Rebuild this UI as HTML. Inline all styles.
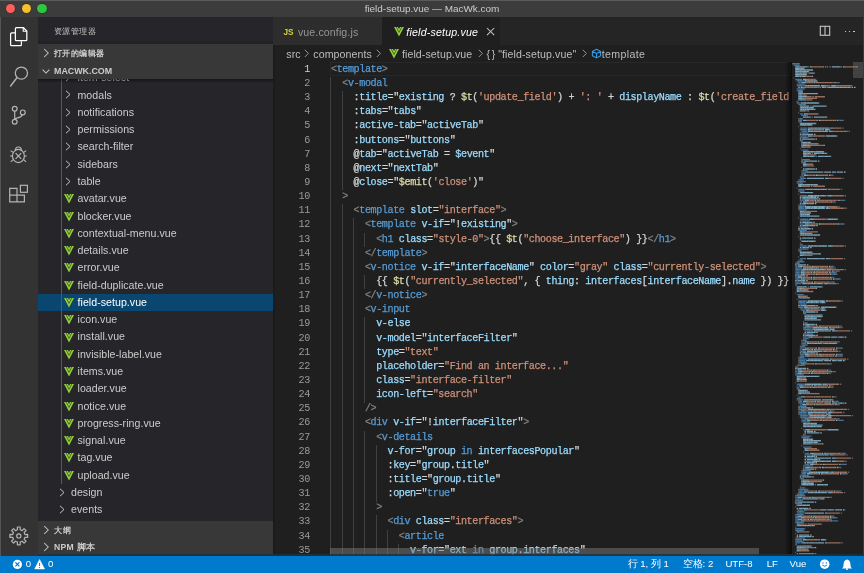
<!DOCTYPE html>
<html><head><meta charset="utf-8">
<style>
*{margin:0;padding:0;box-sizing:border-box}
html,body{width:864px;height:573px;overflow:hidden;background:#1f1f1f;font-family:"Liberation Sans",sans-serif;position:relative}
.abs{position:absolute}
#root{position:absolute;left:0;top:0;width:864px;height:573px;overflow:hidden;will-change:transform}
.row{position:absolute;left:0;width:273.3px;height:17.27px;line-height:16.9px;font-size:10.6px;letter-spacing:0.04px;white-space:nowrap}
.row .tx{position:absolute;top:0}
.sec{position:absolute;left:37.7px;width:235.6px;height:17.28px;background:#383839;color:#cccccc;font-size:8.6px;font-weight:bold;line-height:17.28px;white-space:nowrap}
.ln{position:absolute;left:331.00px;height:14.14px;line-height:14.14px;white-space:pre;font-family:"Liberation Mono",monospace;font-size:10.1px;letter-spacing:-0.408px;-webkit-text-stroke:0.25px}
.num{position:absolute;left:270px;width:39.80px;text-align:right;height:14.14px;line-height:14.14px;font-family:"Liberation Mono",monospace;font-size:10.1px;letter-spacing:-0.408px;color:#9a9a9a}
.num.cur{color:#d0d0d0}
.p{color:#808080}.t{color:#569cd6}.a{color:#9cdcfe}.o{color:#d4d4d4}.s{color:#ce9178}.f{color:#dcdcaa}.v{color:#9cdcfe}.k{color:#569cd6}
.ig{position:absolute;width:0.9px;background:#404040}
.st{position:absolute;top:0;height:17.3px;line-height:17.3px;font-size:9.6px;color:#fff;white-space:nowrap}
</style></head><body><div id="root">
<!-- title bar -->
<div class="abs" style="left:0;top:0;width:864px;height:17.3px;background:#3c3c3c"></div>
<div class="abs" style="left:0;top:0;width:864px;height:0.8px;background:#5a5a5a"></div>
<div class="abs" style="left:0;top:0;width:864px;height:17.3px;line-height:17.6px;text-align:center;color:#cccccc;font-size:9.95px">field-setup.vue — MacWk.com</div>
<div class="abs" style="left:5.9px;top:3.8px;width:9.6px;height:9.6px;border-radius:50%;background:#fc605c;box-shadow:0 0 0 0.5px rgba(0,0,0,0.3)"></div>
<div class="abs" style="left:21.5px;top:3.8px;width:9.6px;height:9.6px;border-radius:50%;background:#f4c02c;box-shadow:0 0 0 0.5px rgba(0,0,0,0.3)"></div>
<div class="abs" style="left:37.3px;top:3.8px;width:9.6px;height:9.6px;border-radius:50%;background:#30c640;box-shadow:0 0 0 0.5px rgba(0,0,0,0.3)"></div>

<!-- activity bar -->
<div class="abs" style="left:0;top:17.3px;width:37.7px;height:538.4px;background:#333333"></div>
<div class="abs" style="left:0;top:17.3px;width:1px;height:538.4px;background:#555555"></div>
<svg class="abs" style="left:0;top:17.3px" width="38" height="38" viewBox="0 17.3 38 38">
<path d="M15.4,33.2 L11.6,33.2 Q10.6,33.2 10.6,34.2 L10.6,45 Q10.6,46 11.6,46 L20.4,46 Q21.4,46 21.4,45 L21.4,41.6" fill="none" stroke="#ffffff" stroke-width="1.25"/>
<path d="M16.4,28 L23.4,28 L26.8,31.4 L26.8,40 Q26.8,41 25.8,41 L16.4,41 Q15.4,41 15.4,40 L15.4,29 Q15.4,28 16.4,28 Z" fill="none" stroke="#ffffff" stroke-width="1.25"/>
<path d="M23.2,28.2 L23.2,31.6 L26.6,31.6" fill="none" stroke="#ffffff" stroke-width="1.1"/>
</svg><svg class="abs" style="left:0;top:55px" width="38" height="38" viewBox="0 55 38 38">
<circle cx="21.4" cy="73.1" r="6.1" fill="none" stroke="#b4b4b4" stroke-width="1.25"/>
<line x1="17.1" y1="77.5" x2="10.6" y2="86" stroke="#b4b4b4" stroke-width="1.4" stroke-linecap="round"/>
</svg><svg class="abs" style="left:0;top:93px" width="38" height="38" viewBox="0 93 38 38">
<circle cx="14.7" cy="108.7" r="2.4" fill="none" stroke="#b4b4b4" stroke-width="1.2"/>
<circle cx="22.8" cy="112.4" r="2.4" fill="none" stroke="#b4b4b4" stroke-width="1.2"/>
<circle cx="14.7" cy="121.8" r="2.4" fill="none" stroke="#b4b4b4" stroke-width="1.2"/>
<path d="M14.7,111.1 L14.7,119.4 M22.3,114.8 Q21.5,117.2 17.5,117.8 Q15.2,118.2 14.9,119.3" fill="none" stroke="#b4b4b4" stroke-width="1.2"/>
</svg><svg class="abs" style="left:0;top:131px" width="38" height="38" viewBox="0 131 38 38">
<path d="M15.4,150.6 Q15.4,147 18.4,147 Q21.4,147 21.4,150.6" fill="none" stroke="#b4b4b4" stroke-width="1.2"/>
<ellipse cx="18.4" cy="156" rx="6" ry="6.6" fill="none" stroke="#b4b4b4" stroke-width="1.2"/>
<path d="M15.6,153.2 L21.2,158.8 M21.2,153.2 L15.6,158.8" stroke="#b4b4b4" stroke-width="1.2"/>
<path d="M12.8,152.2 L10.6,150.6 M12.4,156 L10,156 M12.8,159.8 L10.8,161.8 M24,152.2 L26.2,150.6 M24.4,156 L26.8,156 M24,159.8 L26,161.8" stroke="#b4b4b4" stroke-width="1.1"/>
</svg><svg class="abs" style="left:0;top:169px" width="38" height="38" viewBox="0 169 38 38">
<path d="M9.7,188.3 L17,188.3 L17,201.8 L9.7,201.8 Z M9.7,195.05 L24.4,195.05 L24.4,201.8 L9.7,201.8" fill="none" stroke="#b4b4b4" stroke-width="1.2"/>
<rect x="20.4" y="185.3" width="7" height="7" fill="none" stroke="#b4b4b4" stroke-width="1.2"/>
</svg><svg class="abs" style="left:0;top:516px" width="38" height="38" viewBox="0 516 38 38">
<path d="M24.95,534.53 L27.69,534.47 L27.69,537.33 L24.95,537.27 L24.12,539.28 L26.10,541.17 L24.07,543.20 L22.18,541.22 L20.17,542.05 L20.23,544.79 L17.37,544.79 L17.43,542.05 L15.42,541.22 L13.53,543.20 L11.50,541.17 L13.48,539.28 L12.65,537.27 L9.91,537.33 L9.91,534.47 L12.65,534.53 L13.48,532.52 L11.50,530.63 L13.53,528.60 L15.42,530.58 L17.43,529.75 L17.37,527.01 L20.23,527.01 L20.17,529.75 L22.18,530.58 L24.07,528.60 L26.10,530.63 L24.12,532.52 Z" fill="none" stroke="#b4b4b4" stroke-width="1.2" stroke-linejoin="round"/>
<circle cx="18.80" cy="535.90" r="2.1" fill="none" stroke="#b4b4b4" stroke-width="1.2"/>
</svg>

<!-- sidebar -->
<div class="abs" style="left:37.7px;top:17.3px;width:235.6px;height:538.4px;background:#26262a"></div>
<div class="abs" style="left:37.7px;top:79.3px;width:235.6px;height:441.8px;overflow:hidden">
  <div class="abs" style="left:-37.7px;top:-79.3px;width:273.3px;height:573px">
  <div class="row" style="top:69.39px;color:#cccccc"><svg class="abs" style="left:65.40px;top:3.83px" width="6" height="9"><polyline points="1,0.8 5,4.5 1,8.2" fill="none" stroke="#c5c5c5" stroke-width="1"/></svg><span class="tx" style="left:77.50px">item-select</span></div><div class="row" style="top:86.66px;color:#cccccc"><svg class="abs" style="left:65.40px;top:3.83px" width="6" height="9"><polyline points="1,0.8 5,4.5 1,8.2" fill="none" stroke="#c5c5c5" stroke-width="1"/></svg><span class="tx" style="left:77.50px">modals</span></div><div class="row" style="top:103.93px;color:#cccccc"><svg class="abs" style="left:65.40px;top:3.83px" width="6" height="9"><polyline points="1,0.8 5,4.5 1,8.2" fill="none" stroke="#c5c5c5" stroke-width="1"/></svg><span class="tx" style="left:77.50px">notifications</span></div><div class="row" style="top:121.20px;color:#cccccc"><svg class="abs" style="left:65.40px;top:3.83px" width="6" height="9"><polyline points="1,0.8 5,4.5 1,8.2" fill="none" stroke="#c5c5c5" stroke-width="1"/></svg><span class="tx" style="left:77.50px">permissions</span></div><div class="row" style="top:138.48px;color:#cccccc"><svg class="abs" style="left:65.40px;top:3.83px" width="6" height="9"><polyline points="1,0.8 5,4.5 1,8.2" fill="none" stroke="#c5c5c5" stroke-width="1"/></svg><span class="tx" style="left:77.50px">search-filter</span></div><div class="row" style="top:155.75px;color:#cccccc"><svg class="abs" style="left:65.40px;top:3.83px" width="6" height="9"><polyline points="1,0.8 5,4.5 1,8.2" fill="none" stroke="#c5c5c5" stroke-width="1"/></svg><span class="tx" style="left:77.50px">sidebars</span></div><div class="row" style="top:173.02px;color:#cccccc"><svg class="abs" style="left:65.40px;top:3.83px" width="6" height="9"><polyline points="1,0.8 5,4.5 1,8.2" fill="none" stroke="#c5c5c5" stroke-width="1"/></svg><span class="tx" style="left:77.50px">table</span></div><div class="row" style="top:190.29px;color:#cccccc"><svg class="abs" style="left:64.30px;top:4.13px" width="11" height="11" viewBox="0 0 11 11"><path fill="#92cf3a" d="M0,0 L3.95,0 L5,2 L6.05,0 L10,0 L5,9.6 Z"/><path d="M2.05,-0.3 L5,5.4 L7.95,-0.3" fill="none" stroke="rgba(25,35,30,0.8)" stroke-width="0.7"/></svg><span class="tx" style="left:77.50px">avatar.vue</span></div><div class="row" style="top:207.56px;color:#cccccc"><svg class="abs" style="left:64.30px;top:4.13px" width="11" height="11" viewBox="0 0 11 11"><path fill="#92cf3a" d="M0,0 L3.95,0 L5,2 L6.05,0 L10,0 L5,9.6 Z"/><path d="M2.05,-0.3 L5,5.4 L7.95,-0.3" fill="none" stroke="rgba(25,35,30,0.8)" stroke-width="0.7"/></svg><span class="tx" style="left:77.50px">blocker.vue</span></div><div class="row" style="top:224.83px;color:#cccccc"><svg class="abs" style="left:64.30px;top:4.13px" width="11" height="11" viewBox="0 0 11 11"><path fill="#92cf3a" d="M0,0 L3.95,0 L5,2 L6.05,0 L10,0 L5,9.6 Z"/><path d="M2.05,-0.3 L5,5.4 L7.95,-0.3" fill="none" stroke="rgba(25,35,30,0.8)" stroke-width="0.7"/></svg><span class="tx" style="left:77.50px">contextual-menu.vue</span></div><div class="row" style="top:242.09px;color:#cccccc"><svg class="abs" style="left:64.30px;top:4.13px" width="11" height="11" viewBox="0 0 11 11"><path fill="#92cf3a" d="M0,0 L3.95,0 L5,2 L6.05,0 L10,0 L5,9.6 Z"/><path d="M2.05,-0.3 L5,5.4 L7.95,-0.3" fill="none" stroke="rgba(25,35,30,0.8)" stroke-width="0.7"/></svg><span class="tx" style="left:77.50px">details.vue</span></div><div class="row" style="top:259.37px;color:#cccccc"><svg class="abs" style="left:64.30px;top:4.13px" width="11" height="11" viewBox="0 0 11 11"><path fill="#92cf3a" d="M0,0 L3.95,0 L5,2 L6.05,0 L10,0 L5,9.6 Z"/><path d="M2.05,-0.3 L5,5.4 L7.95,-0.3" fill="none" stroke="rgba(25,35,30,0.8)" stroke-width="0.7"/></svg><span class="tx" style="left:77.50px">error.vue</span></div><div class="row" style="top:276.63px;color:#cccccc"><svg class="abs" style="left:64.30px;top:4.13px" width="11" height="11" viewBox="0 0 11 11"><path fill="#92cf3a" d="M0,0 L3.95,0 L5,2 L6.05,0 L10,0 L5,9.6 Z"/><path d="M2.05,-0.3 L5,5.4 L7.95,-0.3" fill="none" stroke="rgba(25,35,30,0.8)" stroke-width="0.7"/></svg><span class="tx" style="left:77.50px">field-duplicate.vue</span></div><div class="row" style="top:293.90px;background:#094771;color:#ffffff"><svg class="abs" style="left:64.30px;top:4.13px" width="11" height="11" viewBox="0 0 11 11"><path fill="#92cf3a" d="M0,0 L3.95,0 L5,2 L6.05,0 L10,0 L5,9.6 Z"/><path d="M2.05,-0.3 L5,5.4 L7.95,-0.3" fill="none" stroke="rgba(25,35,30,0.8)" stroke-width="0.7"/></svg><span class="tx" style="left:77.50px">field-setup.vue</span></div><div class="row" style="top:311.18px;color:#cccccc"><svg class="abs" style="left:64.30px;top:4.13px" width="11" height="11" viewBox="0 0 11 11"><path fill="#92cf3a" d="M0,0 L3.95,0 L5,2 L6.05,0 L10,0 L5,9.6 Z"/><path d="M2.05,-0.3 L5,5.4 L7.95,-0.3" fill="none" stroke="rgba(25,35,30,0.8)" stroke-width="0.7"/></svg><span class="tx" style="left:77.50px">icon.vue</span></div><div class="row" style="top:328.45px;color:#cccccc"><svg class="abs" style="left:64.30px;top:4.13px" width="11" height="11" viewBox="0 0 11 11"><path fill="#92cf3a" d="M0,0 L3.95,0 L5,2 L6.05,0 L10,0 L5,9.6 Z"/><path d="M2.05,-0.3 L5,5.4 L7.95,-0.3" fill="none" stroke="rgba(25,35,30,0.8)" stroke-width="0.7"/></svg><span class="tx" style="left:77.50px">install.vue</span></div><div class="row" style="top:345.72px;color:#cccccc"><svg class="abs" style="left:64.30px;top:4.13px" width="11" height="11" viewBox="0 0 11 11"><path fill="#92cf3a" d="M0,0 L3.95,0 L5,2 L6.05,0 L10,0 L5,9.6 Z"/><path d="M2.05,-0.3 L5,5.4 L7.95,-0.3" fill="none" stroke="rgba(25,35,30,0.8)" stroke-width="0.7"/></svg><span class="tx" style="left:77.50px">invisible-label.vue</span></div><div class="row" style="top:362.99px;color:#cccccc"><svg class="abs" style="left:64.30px;top:4.13px" width="11" height="11" viewBox="0 0 11 11"><path fill="#92cf3a" d="M0,0 L3.95,0 L5,2 L6.05,0 L10,0 L5,9.6 Z"/><path d="M2.05,-0.3 L5,5.4 L7.95,-0.3" fill="none" stroke="rgba(25,35,30,0.8)" stroke-width="0.7"/></svg><span class="tx" style="left:77.50px">items.vue</span></div><div class="row" style="top:380.25px;color:#cccccc"><svg class="abs" style="left:64.30px;top:4.13px" width="11" height="11" viewBox="0 0 11 11"><path fill="#92cf3a" d="M0,0 L3.95,0 L5,2 L6.05,0 L10,0 L5,9.6 Z"/><path d="M2.05,-0.3 L5,5.4 L7.95,-0.3" fill="none" stroke="rgba(25,35,30,0.8)" stroke-width="0.7"/></svg><span class="tx" style="left:77.50px">loader.vue</span></div><div class="row" style="top:397.52px;color:#cccccc"><svg class="abs" style="left:64.30px;top:4.13px" width="11" height="11" viewBox="0 0 11 11"><path fill="#92cf3a" d="M0,0 L3.95,0 L5,2 L6.05,0 L10,0 L5,9.6 Z"/><path d="M2.05,-0.3 L5,5.4 L7.95,-0.3" fill="none" stroke="rgba(25,35,30,0.8)" stroke-width="0.7"/></svg><span class="tx" style="left:77.50px">notice.vue</span></div><div class="row" style="top:414.79px;color:#cccccc"><svg class="abs" style="left:64.30px;top:4.13px" width="11" height="11" viewBox="0 0 11 11"><path fill="#92cf3a" d="M0,0 L3.95,0 L5,2 L6.05,0 L10,0 L5,9.6 Z"/><path d="M2.05,-0.3 L5,5.4 L7.95,-0.3" fill="none" stroke="rgba(25,35,30,0.8)" stroke-width="0.7"/></svg><span class="tx" style="left:77.50px">progress-ring.vue</span></div><div class="row" style="top:432.07px;color:#cccccc"><svg class="abs" style="left:64.30px;top:4.13px" width="11" height="11" viewBox="0 0 11 11"><path fill="#92cf3a" d="M0,0 L3.95,0 L5,2 L6.05,0 L10,0 L5,9.6 Z"/><path d="M2.05,-0.3 L5,5.4 L7.95,-0.3" fill="none" stroke="rgba(25,35,30,0.8)" stroke-width="0.7"/></svg><span class="tx" style="left:77.50px">signal.vue</span></div><div class="row" style="top:449.34px;color:#cccccc"><svg class="abs" style="left:64.30px;top:4.13px" width="11" height="11" viewBox="0 0 11 11"><path fill="#92cf3a" d="M0,0 L3.95,0 L5,2 L6.05,0 L10,0 L5,9.6 Z"/><path d="M2.05,-0.3 L5,5.4 L7.95,-0.3" fill="none" stroke="rgba(25,35,30,0.8)" stroke-width="0.7"/></svg><span class="tx" style="left:77.50px">tag.vue</span></div><div class="row" style="top:466.61px;color:#cccccc"><svg class="abs" style="left:64.30px;top:4.13px" width="11" height="11" viewBox="0 0 11 11"><path fill="#92cf3a" d="M0,0 L3.95,0 L5,2 L6.05,0 L10,0 L5,9.6 Z"/><path d="M2.05,-0.3 L5,5.4 L7.95,-0.3" fill="none" stroke="rgba(25,35,30,0.8)" stroke-width="0.7"/></svg><span class="tx" style="left:77.50px">upload.vue</span></div><div class="row" style="top:483.88px;color:#cccccc"><svg class="abs" style="left:58.90px;top:3.83px" width="6" height="9"><polyline points="1,0.8 5,4.5 1,8.2" fill="none" stroke="#c5c5c5" stroke-width="1"/></svg><span class="tx" style="left:71.00px">design</span></div><div class="row" style="top:501.14px;color:#cccccc"><svg class="abs" style="left:58.90px;top:3.83px" width="6" height="9"><polyline points="1,0.8 5,4.5 1,8.2" fill="none" stroke="#c5c5c5" stroke-width="1"/></svg><span class="tx" style="left:71.00px">events</span></div>
  <div class="abs" style="left:61.3px;top:79.3px;width:0.9px;height:405px;background:#585858"></div>
  </div>
</div>
<div class="abs" style="left:53.8px;top:17.3px;height:27.5px;line-height:29.6px;font-size:8.3px;letter-spacing:0.5px;color:#cccccc;white-space:nowrap">资源管理器</div>
<div class="abs" style="left:37.7px;top:41px;width:235.6px;height:3px;background:#222226"></div>
<div class="sec" style="top:44.1px;height:17.95px"><svg class="abs" style="left:5.00px;top:3.90px" width="7" height="10"><polyline points="1.2,1 5.2,5 1.2,9" fill="none" stroke="#c5c5c5" stroke-width="1.05"/></svg><span class="abs" style="left:16.3px;top:0.6px;font-size:8.3px;letter-spacing:0.4px">打开的编辑器</span></div>
<div class="sec" style="top:62.05px"><svg class="abs" style="left:3.40px;top:5.80px" width="10" height="7"><polyline points="1.6,1.6 5,5 8.4,1.6" fill="none" stroke="#c5c5c5" stroke-width="1.05"/></svg><span class="abs" style="left:16.3px;top:0.9px;font-size:8.9px">MACWK.COM</span></div>
<div class="abs" style="left:37.7px;top:79.3px;width:235.6px;height:4px;background:linear-gradient(rgba(0,0,0,0.45),rgba(0,0,0,0))"></div>
<div class="sec" style="top:521.1px"><svg class="abs" style="left:5.00px;top:3.90px" width="7" height="10"><polyline points="1.2,1 5.2,5 1.2,9" fill="none" stroke="#c5c5c5" stroke-width="1.05"/></svg><span class="abs" style="left:16.3px;top:0.9px;font-size:8.4px;letter-spacing:0.8px">大纲</span></div>
<div class="sec" style="top:538.4px"><svg class="abs" style="left:5.00px;top:3.90px" width="7" height="10"><polyline points="1.2,1 5.2,5 1.2,9" fill="none" stroke="#c5c5c5" stroke-width="1.05"/></svg><span class="abs" style="left:16.3px;top:1.1px;font-size:8.6px;letter-spacing:0.35px">NPM 脚本</span></div>

<!-- editor -->
<div class="abs" style="left:273.3px;top:17.3px;width:590.7px;height:27.5px;background:#252526"></div>
<div class="abs" style="left:273.3px;top:44.8px;width:1.6px;height:510.9px;background:#1b1b1b"></div>
<div class="abs" style="left:273.3px;top:17.3px;width:108.4px;height:27.5px;background:#2d2d2d"></div>
<div class="abs" style="left:283.6px;top:18.5px;height:27.5px;line-height:27.5px;font-size:8.2px;letter-spacing:-0.2px;font-weight:bold;color:#d8d23a">JS</div>
<div class="abs" style="left:297.9px;top:18.5px;height:27.5px;line-height:27.5px;font-size:10.6px;letter-spacing:0.12px;color:#969696">vue.config.js</div>
<div class="abs" style="left:381.7px;top:17.3px;width:118.5px;height:27.5px;background:#1f1f1f"></div>
<svg class="abs" style="left:394.00px;top:27.40px" width="11" height="11" viewBox="0 0 11 11"><path fill="#92cf3a" d="M0,0 L3.95,0 L5,2 L6.05,0 L10,0 L5,9.6 Z"/><path d="M2.05,-0.3 L5,5.4 L7.95,-0.3" fill="none" stroke="rgba(25,35,30,0.8)" stroke-width="0.7"/></svg>
<div class="abs" style="left:406.3px;top:18.5px;height:27.5px;line-height:27.5px;font-size:10.6px;letter-spacing:0.2px;font-style:italic;color:#ffffff">field-setup.vue</div>
<svg class="abs" style="left:486.3px;top:27.2px" width="10" height="10"><path d="M1,1 L8.2,8.2 M8.2,1 L1,8.2" stroke="#c5c5c5" stroke-width="1.05"/></svg>
<svg class="abs" style="left:818px;top:24px" width="14" height="14"><rect x="2.3" y="2.3" width="9.4" height="9" fill="none" stroke="#c5c5c5" stroke-width="1.1"/><line x1="7" y1="2.3" x2="7" y2="11.3" stroke="#c5c5c5" stroke-width="1.1"/></svg>
<div class="abs" style="left:844.7px;top:30.8px;width:1.6px;height:1.6px;background:#c5c5c5"></div>
<div class="abs" style="left:848.9px;top:30.8px;width:1.6px;height:1.6px;background:#c5c5c5"></div>
<div class="abs" style="left:853.1px;top:30.8px;width:1.6px;height:1.6px;background:#c5c5c5"></div>

<!-- breadcrumbs -->
<div class="abs" style="left:286.30px;top:44.77px;height:17.28px;line-height:18.2px;font-size:10.6px;letter-spacing:0.1px;color:#bdbdbd;white-space:nowrap;">src</div><svg class="abs" style="left:304.40px;top:49.3px" width="6" height="9"><polyline points="0.8,0.8 4.4,4.4 0.8,8" fill="none" stroke="#a0a0a0" stroke-width="0.9"/></svg><div class="abs" style="left:313.30px;top:44.77px;height:17.28px;line-height:18.2px;font-size:10.6px;letter-spacing:0.1px;color:#bdbdbd;white-space:nowrap;">components</div><svg class="abs" style="left:376.00px;top:49.3px" width="6" height="9"><polyline points="0.8,0.8 4.4,4.4 0.8,8" fill="none" stroke="#a0a0a0" stroke-width="0.9"/></svg><svg class="abs" style="left:388.80px;top:48.80px" width="11" height="11" viewBox="0 0 11 11"><path fill="#92cf3a" d="M0,0 L3.95,0 L5,2 L6.05,0 L10,0 L5,9.6 Z"/><path d="M2.05,-0.3 L5,5.4 L7.95,-0.3" fill="none" stroke="rgba(25,35,30,0.8)" stroke-width="0.7"/></svg><div class="abs" style="left:401.90px;top:44.77px;height:17.28px;line-height:18.2px;font-size:10.6px;letter-spacing:0.1px;color:#bdbdbd;white-space:nowrap;">field-setup.vue</div><svg class="abs" style="left:477.80px;top:49.3px" width="6" height="9"><polyline points="0.8,0.8 4.4,4.4 0.8,8" fill="none" stroke="#a0a0a0" stroke-width="0.9"/></svg><div class="abs" style="left:486.60px;top:44.77px;height:17.28px;line-height:18.2px;font-size:10.6px;letter-spacing:0.1px;color:#bdbdbd;white-space:nowrap;letter-spacing:1.5px">{}</div><div class="abs" style="left:498.20px;top:44.77px;height:17.28px;line-height:18.2px;font-size:10.6px;letter-spacing:0.1px;color:#bdbdbd;white-space:nowrap;">"field-setup.vue"</div><svg class="abs" style="left:582.00px;top:49.3px" width="6" height="9"><polyline points="0.8,0.8 4.4,4.4 0.8,8" fill="none" stroke="#a0a0a0" stroke-width="0.9"/></svg><svg class="abs" style="left:590.5px;top:47.8px" width="12" height="12"><path d="M5.5,1.3 L9.6,3.4 L9.6,7.8 L5.5,9.9 L1.4,7.8 L1.4,3.4 Z M1.4,3.4 L5.5,5.5 L9.6,3.4 M5.5,5.5 L5.5,9.9" fill="none" stroke="#3a9ce0" stroke-width="1.05" stroke-linejoin="round"/></svg><div class="abs" style="left:601.70px;top:44.77px;height:17.28px;line-height:18.2px;font-size:10.6px;letter-spacing:0.1px;color:#bdbdbd;white-space:nowrap;letter-spacing:0.38px">template</div>

<!-- code -->
<div class="abs" style="left:329.5px;top:62.2px;width:461.5px;height:14.2px;border:1.2px solid #282828"></div>
<div class="num cur" style="top:62.90px">1</div><div class="num" style="top:77.04px">2</div><div class="num" style="top:91.18px">3</div><div class="num" style="top:105.32px">4</div><div class="num" style="top:119.46px">5</div><div class="num" style="top:133.60px">6</div><div class="num" style="top:147.74px">7</div><div class="num" style="top:161.88px">8</div><div class="num" style="top:176.02px">9</div><div class="num" style="top:190.16px">10</div><div class="num" style="top:204.30px">11</div><div class="num" style="top:218.44px">12</div><div class="num" style="top:232.58px">13</div><div class="num" style="top:246.72px">14</div><div class="num" style="top:260.86px">15</div><div class="num" style="top:275.00px">16</div><div class="num" style="top:289.14px">17</div><div class="num" style="top:303.28px">18</div><div class="num" style="top:317.42px">19</div><div class="num" style="top:331.56px">20</div><div class="num" style="top:345.70px">21</div><div class="num" style="top:359.84px">22</div><div class="num" style="top:373.98px">23</div><div class="num" style="top:388.12px">24</div><div class="num" style="top:402.26px">25</div><div class="num" style="top:416.40px">26</div><div class="num" style="top:430.54px">27</div><div class="num" style="top:444.68px">28</div><div class="num" style="top:458.82px">29</div><div class="num" style="top:472.96px">30</div><div class="num" style="top:487.10px">31</div><div class="num" style="top:501.24px">32</div><div class="num" style="top:515.38px">33</div><div class="num" style="top:529.52px">34</div><div class="num" style="top:543.66px">35</div>
<div class="abs" style="left:0;top:0;width:791px;height:555.7px;overflow:hidden">
<div class="ig" style="left:330.40px;top:77.04px;height:14.44px"></div><div class="ig" style="left:330.40px;top:91.18px;height:14.44px"></div><div class="ig" style="left:341.70px;top:91.18px;height:14.44px"></div><div class="ig" style="left:330.40px;top:105.32px;height:14.44px"></div><div class="ig" style="left:341.70px;top:105.32px;height:14.44px"></div><div class="ig" style="left:330.40px;top:119.46px;height:14.44px"></div><div class="ig" style="left:341.70px;top:119.46px;height:14.44px"></div><div class="ig" style="left:330.40px;top:133.60px;height:14.44px"></div><div class="ig" style="left:341.70px;top:133.60px;height:14.44px"></div><div class="ig" style="left:330.40px;top:147.74px;height:14.44px"></div><div class="ig" style="left:341.70px;top:147.74px;height:14.44px"></div><div class="ig" style="left:330.40px;top:161.88px;height:14.44px"></div><div class="ig" style="left:341.70px;top:161.88px;height:14.44px"></div><div class="ig" style="left:330.40px;top:176.02px;height:14.44px"></div><div class="ig" style="left:341.70px;top:176.02px;height:14.44px"></div><div class="ig" style="left:330.40px;top:190.16px;height:14.44px"></div><div class="ig" style="left:330.40px;top:204.30px;height:14.44px"></div><div class="ig" style="left:341.70px;top:204.30px;height:14.44px"></div><div class="ig" style="left:330.40px;top:218.44px;height:14.44px"></div><div class="ig" style="left:341.70px;top:218.44px;height:14.44px"></div><div class="ig" style="left:353.01px;top:218.44px;height:14.44px"></div><div class="ig" style="left:330.40px;top:232.58px;height:14.44px"></div><div class="ig" style="left:341.70px;top:232.58px;height:14.44px"></div><div class="ig" style="left:353.01px;top:232.58px;height:14.44px"></div><div class="ig" style="left:364.31px;top:232.58px;height:14.44px"></div><div class="ig" style="left:330.40px;top:246.72px;height:14.44px"></div><div class="ig" style="left:341.70px;top:246.72px;height:14.44px"></div><div class="ig" style="left:353.01px;top:246.72px;height:14.44px"></div><div class="ig" style="left:330.40px;top:260.86px;height:14.44px"></div><div class="ig" style="left:341.70px;top:260.86px;height:14.44px"></div><div class="ig" style="left:353.01px;top:260.86px;height:14.44px"></div><div class="ig" style="left:330.40px;top:275.00px;height:14.44px"></div><div class="ig" style="left:341.70px;top:275.00px;height:14.44px"></div><div class="ig" style="left:353.01px;top:275.00px;height:14.44px"></div><div class="ig" style="left:364.31px;top:275.00px;height:14.44px"></div><div class="ig" style="left:330.40px;top:289.14px;height:14.44px"></div><div class="ig" style="left:341.70px;top:289.14px;height:14.44px"></div><div class="ig" style="left:353.01px;top:289.14px;height:14.44px"></div><div class="ig" style="left:330.40px;top:303.28px;height:14.44px"></div><div class="ig" style="left:341.70px;top:303.28px;height:14.44px"></div><div class="ig" style="left:353.01px;top:303.28px;height:14.44px"></div><div class="ig" style="left:330.40px;top:317.42px;height:14.44px"></div><div class="ig" style="left:341.70px;top:317.42px;height:14.44px"></div><div class="ig" style="left:353.01px;top:317.42px;height:14.44px"></div><div class="ig" style="left:364.31px;top:317.42px;height:14.44px"></div><div class="ig" style="left:330.40px;top:331.56px;height:14.44px"></div><div class="ig" style="left:341.70px;top:331.56px;height:14.44px"></div><div class="ig" style="left:353.01px;top:331.56px;height:14.44px"></div><div class="ig" style="left:364.31px;top:331.56px;height:14.44px"></div><div class="ig" style="left:330.40px;top:345.70px;height:14.44px"></div><div class="ig" style="left:341.70px;top:345.70px;height:14.44px"></div><div class="ig" style="left:353.01px;top:345.70px;height:14.44px"></div><div class="ig" style="left:364.31px;top:345.70px;height:14.44px"></div><div class="ig" style="left:330.40px;top:359.84px;height:14.44px"></div><div class="ig" style="left:341.70px;top:359.84px;height:14.44px"></div><div class="ig" style="left:353.01px;top:359.84px;height:14.44px"></div><div class="ig" style="left:364.31px;top:359.84px;height:14.44px"></div><div class="ig" style="left:330.40px;top:373.98px;height:14.44px"></div><div class="ig" style="left:341.70px;top:373.98px;height:14.44px"></div><div class="ig" style="left:353.01px;top:373.98px;height:14.44px"></div><div class="ig" style="left:364.31px;top:373.98px;height:14.44px"></div><div class="ig" style="left:330.40px;top:388.12px;height:14.44px"></div><div class="ig" style="left:341.70px;top:388.12px;height:14.44px"></div><div class="ig" style="left:353.01px;top:388.12px;height:14.44px"></div><div class="ig" style="left:364.31px;top:388.12px;height:14.44px"></div><div class="ig" style="left:330.40px;top:402.26px;height:14.44px"></div><div class="ig" style="left:341.70px;top:402.26px;height:14.44px"></div><div class="ig" style="left:353.01px;top:402.26px;height:14.44px"></div><div class="ig" style="left:330.40px;top:416.40px;height:14.44px"></div><div class="ig" style="left:341.70px;top:416.40px;height:14.44px"></div><div class="ig" style="left:353.01px;top:416.40px;height:14.44px"></div><div class="ig" style="left:330.40px;top:430.54px;height:14.44px"></div><div class="ig" style="left:341.70px;top:430.54px;height:14.44px"></div><div class="ig" style="left:353.01px;top:430.54px;height:14.44px"></div><div class="ig" style="left:364.31px;top:430.54px;height:14.44px"></div><div class="ig" style="left:330.40px;top:444.68px;height:14.44px"></div><div class="ig" style="left:341.70px;top:444.68px;height:14.44px"></div><div class="ig" style="left:353.01px;top:444.68px;height:14.44px"></div><div class="ig" style="left:364.31px;top:444.68px;height:14.44px"></div><div class="ig" style="left:375.62px;top:444.68px;height:14.44px"></div><div class="ig" style="left:330.40px;top:458.82px;height:14.44px"></div><div class="ig" style="left:341.70px;top:458.82px;height:14.44px"></div><div class="ig" style="left:353.01px;top:458.82px;height:14.44px"></div><div class="ig" style="left:364.31px;top:458.82px;height:14.44px"></div><div class="ig" style="left:375.62px;top:458.82px;height:14.44px"></div><div class="ig" style="left:330.40px;top:472.96px;height:14.44px"></div><div class="ig" style="left:341.70px;top:472.96px;height:14.44px"></div><div class="ig" style="left:353.01px;top:472.96px;height:14.44px"></div><div class="ig" style="left:364.31px;top:472.96px;height:14.44px"></div><div class="ig" style="left:375.62px;top:472.96px;height:14.44px"></div><div class="ig" style="left:330.40px;top:487.10px;height:14.44px"></div><div class="ig" style="left:341.70px;top:487.10px;height:14.44px"></div><div class="ig" style="left:353.01px;top:487.10px;height:14.44px"></div><div class="ig" style="left:364.31px;top:487.10px;height:14.44px"></div><div class="ig" style="left:375.62px;top:487.10px;height:14.44px"></div><div class="ig" style="left:330.40px;top:501.24px;height:14.44px"></div><div class="ig" style="left:341.70px;top:501.24px;height:14.44px"></div><div class="ig" style="left:353.01px;top:501.24px;height:14.44px"></div><div class="ig" style="left:364.31px;top:501.24px;height:14.44px"></div><div class="ig" style="left:330.40px;top:515.38px;height:14.44px"></div><div class="ig" style="left:341.70px;top:515.38px;height:14.44px"></div><div class="ig" style="left:353.01px;top:515.38px;height:14.44px"></div><div class="ig" style="left:364.31px;top:515.38px;height:14.44px"></div><div class="ig" style="left:375.62px;top:515.38px;height:14.44px"></div><div class="ig" style="left:330.40px;top:529.52px;height:14.44px"></div><div class="ig" style="left:341.70px;top:529.52px;height:14.44px"></div><div class="ig" style="left:353.01px;top:529.52px;height:14.44px"></div><div class="ig" style="left:364.31px;top:529.52px;height:14.44px"></div><div class="ig" style="left:375.62px;top:529.52px;height:14.44px"></div><div class="ig" style="left:386.92px;top:529.52px;height:14.44px"></div><div class="ig" style="left:330.40px;top:543.66px;height:14.44px"></div><div class="ig" style="left:341.70px;top:543.66px;height:14.44px"></div><div class="ig" style="left:353.01px;top:543.66px;height:14.44px"></div><div class="ig" style="left:364.31px;top:543.66px;height:14.44px"></div><div class="ig" style="left:375.62px;top:543.66px;height:14.44px"></div><div class="ig" style="left:386.92px;top:543.66px;height:14.44px"></div><div class="ig" style="left:398.22px;top:543.66px;height:14.44px"></div>
<div class="ln" style="top:62.90px"><span class="p">&lt;</span><span class="t">template</span><span class="p">&gt;</span></div><div class="ln" style="top:77.04px"><span class="o">  </span><span class="p">&lt;</span><span class="t">v-modal</span></div><div class="ln" style="top:91.18px"><span class="o">    </span><span class="o">:</span><span class="a">title</span><span class="o">=&quot;</span><span class="v">existing</span><span class="o"> </span><span class="o">?</span><span class="o"> </span><span class="f">$t</span><span class="o">(</span><span class="s">&#x27;update_field&#x27;</span><span class="o">)</span><span class="o"> </span><span class="o">+</span><span class="o"> </span><span class="s">&#x27;: &#x27;</span><span class="o"> </span><span class="o">+</span><span class="o"> </span><span class="v">displayName</span><span class="o"> </span><span class="o">:</span><span class="o"> </span><span class="f">$t</span><span class="o">(</span><span class="s">&#x27;create_field&#x27;</span><span class="o">)</span><span class="o">&quot;</span></div><div class="ln" style="top:105.32px"><span class="o">    </span><span class="o">:</span><span class="a">tabs</span><span class="o">=&quot;</span><span class="v">tabs</span><span class="o">&quot;</span></div><div class="ln" style="top:119.46px"><span class="o">    </span><span class="o">:</span><span class="a">active-tab</span><span class="o">=&quot;</span><span class="v">activeTab</span><span class="o">&quot;</span></div><div class="ln" style="top:133.60px"><span class="o">    </span><span class="o">:</span><span class="a">buttons</span><span class="o">=&quot;</span><span class="v">buttons</span><span class="o">&quot;</span></div><div class="ln" style="top:147.74px"><span class="o">    </span><span class="o">@</span><span class="a">tab</span><span class="o">=&quot;</span><span class="v">activeTab</span><span class="o"> </span><span class="o">=</span><span class="o"> </span><span class="v">$event</span><span class="o">&quot;</span></div><div class="ln" style="top:161.88px"><span class="o">    </span><span class="o">@</span><span class="a">next</span><span class="o">=&quot;</span><span class="v">nextTab</span><span class="o">&quot;</span></div><div class="ln" style="top:176.02px"><span class="o">    </span><span class="o">@</span><span class="a">close</span><span class="o">=&quot;</span><span class="f">$emit</span><span class="o">(</span><span class="s">&#x27;close&#x27;</span><span class="o">)</span><span class="o">&quot;</span></div><div class="ln" style="top:190.16px"><span class="o">  </span><span class="p">&gt;</span></div><div class="ln" style="top:204.30px"><span class="o">    </span><span class="p">&lt;</span><span class="t">template</span><span class="o"> </span><span class="a">slot</span><span class="o">=</span><span class="s">&quot;interface&quot;</span><span class="p">&gt;</span></div><div class="ln" style="top:218.44px"><span class="o">      </span><span class="p">&lt;</span><span class="t">template</span><span class="o"> </span><span class="a">v-if</span><span class="o">=&quot;</span><span class="o">!</span><span class="v">existing</span><span class="o">&quot;</span><span class="p">&gt;</span></div><div class="ln" style="top:232.58px"><span class="o">        </span><span class="p">&lt;</span><span class="t">h1</span><span class="o"> </span><span class="a">class</span><span class="o">=</span><span class="s">&quot;style-0&quot;</span><span class="p">&gt;</span><span class="o">{{</span><span class="o"> </span><span class="f">$t</span><span class="o">(</span><span class="s">&quot;choose_interface&quot;</span><span class="o">)</span><span class="o"> </span><span class="o">}}</span><span class="p">&lt;/</span><span class="t">h1</span><span class="p">&gt;</span></div><div class="ln" style="top:246.72px"><span class="o">      </span><span class="p">&lt;/</span><span class="t">template</span><span class="p">&gt;</span></div><div class="ln" style="top:260.86px"><span class="o">      </span><span class="p">&lt;</span><span class="t">v-notice</span><span class="o"> </span><span class="a">v-if</span><span class="o">=&quot;</span><span class="v">interfaceName</span><span class="o">&quot;</span><span class="o"> </span><span class="a">color</span><span class="o">=</span><span class="s">&quot;gray&quot;</span><span class="o"> </span><span class="a">class</span><span class="o">=</span><span class="s">&quot;currently-selected&quot;</span><span class="p">&gt;</span></div><div class="ln" style="top:275.00px"><span class="o">        </span><span class="o">{{</span><span class="o"> </span><span class="f">$t</span><span class="o">(</span><span class="s">&quot;currently_selected&quot;</span><span class="o">,</span><span class="o"> </span><span class="o">{</span><span class="o"> </span><span class="v">thing</span><span class="o">:</span><span class="o"> </span><span class="v">interfaces</span><span class="o">[</span><span class="v">interfaceName</span><span class="o">]</span><span class="o">.</span><span class="v">name</span><span class="o"> </span><span class="o">}</span><span class="o">)</span><span class="o"> </span><span class="o">}}</span></div><div class="ln" style="top:289.14px"><span class="o">      </span><span class="p">&lt;/</span><span class="t">v-notice</span><span class="p">&gt;</span></div><div class="ln" style="top:303.28px"><span class="o">      </span><span class="p">&lt;</span><span class="t">v-input</span></div><div class="ln" style="top:317.42px"><span class="o">        </span><span class="a">v-else</span></div><div class="ln" style="top:331.56px"><span class="o">        </span><span class="a">v-model</span><span class="o">=&quot;</span><span class="v">interfaceFilter</span><span class="o">&quot;</span></div><div class="ln" style="top:345.70px"><span class="o">        </span><span class="a">type</span><span class="o">=</span><span class="s">&quot;text&quot;</span></div><div class="ln" style="top:359.84px"><span class="o">        </span><span class="a">placeholder</span><span class="o">=</span><span class="s">&quot;Find an interface...&quot;</span></div><div class="ln" style="top:373.98px"><span class="o">        </span><span class="a">class</span><span class="o">=</span><span class="s">&quot;interface-filter&quot;</span></div><div class="ln" style="top:388.12px"><span class="o">        </span><span class="a">icon-left</span><span class="o">=</span><span class="s">&quot;search&quot;</span></div><div class="ln" style="top:402.26px"><span class="o">      </span><span class="p">/&gt;</span></div><div class="ln" style="top:416.40px"><span class="o">      </span><span class="p">&lt;</span><span class="t">div</span><span class="o"> </span><span class="a">v-if</span><span class="o">=&quot;</span><span class="o">!</span><span class="v">interfaceFilter</span><span class="o">&quot;</span><span class="p">&gt;</span></div><div class="ln" style="top:430.54px"><span class="o">        </span><span class="p">&lt;</span><span class="t">v-details</span></div><div class="ln" style="top:444.68px"><span class="o">          </span><span class="a">v-for</span><span class="o">=&quot;</span><span class="v">group</span><span class="o"> </span><span class="k">in</span><span class="o"> </span><span class="v">interfacesPopular</span><span class="o">&quot;</span></div><div class="ln" style="top:458.82px"><span class="o">          </span><span class="o">:</span><span class="a">key</span><span class="o">=&quot;</span><span class="v">group</span><span class="o">.</span><span class="v">title</span><span class="o">&quot;</span></div><div class="ln" style="top:472.96px"><span class="o">          </span><span class="o">:</span><span class="a">title</span><span class="o">=&quot;</span><span class="v">group</span><span class="o">.</span><span class="v">title</span><span class="o">&quot;</span></div><div class="ln" style="top:487.10px"><span class="o">          </span><span class="o">:</span><span class="a">open</span><span class="o">=&quot;</span><span class="k">true</span><span class="o">&quot;</span></div><div class="ln" style="top:501.24px"><span class="o">        </span><span class="p">&gt;</span></div><div class="ln" style="top:515.38px"><span class="o">          </span><span class="p">&lt;</span><span class="t">div</span><span class="o"> </span><span class="a">class</span><span class="o">=</span><span class="s">&quot;interfaces&quot;</span><span class="p">&gt;</span></div><div class="ln" style="top:529.52px"><span class="o">            </span><span class="p">&lt;</span><span class="t">article</span></div><div class="ln" style="top:543.66px"><span class="o">              </span><span class="a">v-for</span><span class="o">=&quot;</span><span class="v">ext</span><span class="o"> </span><span class="k">in</span><span class="o"> </span><span class="v">group</span><span class="o">.</span><span class="v">interfaces</span><span class="o">&quot;</span></div>
</div>
<svg class="abs" style="left:791.60px;top:62.60px;opacity:0.8" width="72.40" height="493.10"><path d="M0.00,0.75h0.79M7.06,0.75h0.79M1.57,2.32h0.79M1.57,14.89h0.79M3.14,16.46h0.79M23.55,16.46h0.79M4.71,18.03h0.79M25.12,18.03h0.79M6.28,19.60h0.79M21.19,19.60h0.79M43.96,19.60h1.57M47.10,19.60h0.79M4.71,21.17h1.57M12.56,21.17h0.79M4.71,22.74h0.79M59.66,22.74h0.79M4.71,25.89h1.57M12.56,25.89h0.79M4.71,27.46h0.79M4.71,38.45h1.57M4.71,40.02h0.79M26.69,40.02h0.79M6.28,41.60h0.79M6.28,49.45h0.79M7.85,51.02h0.79M25.90,51.02h0.79M9.42,52.59h0.79M6.28,55.74h1.57M10.21,55.74h0.79M6.28,57.31h0.79M23.55,57.31h0.79M46.31,57.31h1.57M51.02,57.31h0.79M6.28,58.88h0.79M6.28,63.59h0.79M7.85,65.16h0.79M50.24,65.16h1.57M7.85,66.73h0.79M37.68,66.73h0.79M9.42,68.30h0.79M56.52,68.30h1.57M7.85,69.87h1.57M15.70,69.87h0.79M7.85,73.02h0.79M44.74,73.02h0.79M7.85,74.59h1.57M15.70,74.59h0.79M7.85,77.73h0.79M7.85,85.58h0.79M9.42,87.16h0.79M9.42,95.01h0.79M9.42,96.58h1.57M17.27,96.58h0.79M9.42,99.72h0.79M9.42,104.44h0.79M9.42,107.58h1.57M14.91,107.58h0.79M9.42,109.15h0.79M53.38,109.15h0.79M9.42,110.72h1.57M13.35,110.72h0.79M9.42,112.29h0.79M20.41,112.29h0.79M38.46,112.29h1.57M40.82,112.29h0.79M7.85,113.86h1.57M11.78,113.86h0.79M7.85,115.43h0.79M50.24,115.43h1.57M6.28,117.00h1.57M10.99,117.00h0.79M4.71,118.58h1.57M13.35,118.58h0.79M4.71,120.15h0.79M4.71,124.86h0.79M6.28,126.43h0.79M48.67,126.43h1.57M6.28,128.00h0.79M6.28,131.14h0.79M7.85,132.71h0.79M52.59,132.71h1.57M7.85,137.43h0.79M21.98,137.43h0.79M47.88,137.43h1.57M52.59,137.43h0.79M7.85,139.00h0.79M19.62,139.00h0.79M40.03,139.00h1.57M43.17,139.00h0.79M6.28,142.14h1.57M13.35,142.14h0.79M6.28,143.71h0.79M46.31,143.71h1.57M6.28,145.28h0.79M53.38,145.28h1.57M6.28,146.85h0.79M6.28,154.71h0.79M7.85,156.28h0.79M45.53,156.28h0.79M7.85,157.85h1.57M17.27,157.85h0.79M7.85,160.99h0.79M23.55,160.99h0.79M47.10,160.99h1.57M51.81,160.99h0.79M6.28,164.13h1.57M15.70,164.13h0.79M6.28,167.28h0.79M6.28,173.56h0.79M7.85,176.70h0.79M7.85,179.84h0.79M7.85,181.41h1.57M10.21,181.41h0.79M7.85,182.99h0.79M52.59,182.99h1.57M6.28,186.13h1.57M15.70,186.13h0.79M6.28,187.70h0.79M6.28,193.98h0.79M7.85,195.55h0.79M51.81,195.55h1.57M6.28,197.13h1.57M10.21,197.13h0.79M4.71,198.70h1.57M11.78,198.70h0.79M3.14,200.27h1.57M7.07,200.27h0.79M3.14,203.41h0.79M16.48,203.41h0.79M38.46,203.41h1.57M41.61,203.41h0.79M3.14,204.98h0.79M42.39,204.98h1.57M3.14,206.55h0.79M52.59,206.55h1.57M3.14,208.12h0.79M21.19,208.12h0.79M41.60,208.12h1.57M47.10,208.12h0.79M3.14,209.69h0.79M18.05,209.69h0.79M38.46,209.69h1.57M43.96,209.69h0.79M3.14,211.26h0.79M20.41,211.26h0.79M39.25,211.26h1.57M44.74,211.26h0.79M3.14,214.41h0.79M18.05,214.41h0.79M39.25,214.41h1.57M41.60,214.41h0.79M3.14,215.98h0.79M18.05,215.98h0.79M42.39,215.98h1.57M47.88,215.98h0.79M3.14,219.12h0.79M18.84,219.12h0.79M36.89,219.12h1.57M42.39,219.12h0.79M3.14,220.69h0.79M45.53,220.69h1.57M3.14,222.26h0.79M3.14,230.12h0.79M4.71,231.69h0.79M4.71,236.40h0.79M6.28,237.97h0.79M49.45,237.97h1.57M6.28,239.54h0.79M32.97,239.54h0.79M6.28,241.11h1.57M14.13,241.11h0.79M6.28,244.26h0.79M43.96,244.26h0.79M7.85,245.83h0.79M32.97,245.83h0.79M9.42,247.40h0.79M33.75,247.40h0.79M10.99,250.54h0.79M10.99,258.39h0.79M10.99,259.96h1.57M14.92,259.96h0.79M10.99,263.11h0.79M23.55,263.11h0.79M47.10,263.11h1.57M49.45,263.11h0.79M10.99,264.68h0.79M49.45,264.68h1.57M10.99,266.25h0.79M42.39,266.25h0.79M12.56,267.82h0.79M58.87,267.82h1.57M10.99,270.96h1.57M20.41,270.96h0.79M10.99,274.10h0.79M54.16,274.10h0.79M10.99,275.68h1.57M16.49,275.68h0.79M9.42,277.25h1.57M14.13,277.25h0.79M9.42,278.82h0.79M25.12,278.82h0.79M43.96,278.82h1.57M47.10,278.82h0.79M9.42,280.39h0.79M44.74,280.39h0.79M9.42,281.96h1.57M14.91,281.96h0.79M7.85,283.53h1.57M12.56,283.53h0.79M7.85,285.10h0.79M22.76,285.10h0.79M45.53,285.10h1.57M50.24,285.10h0.79M7.85,286.67h0.79M18.84,286.67h0.79M42.39,286.67h1.57M44.74,286.67h0.79M7.85,288.24h0.79M47.10,288.24h1.57M7.85,291.38h0.79M23.55,291.38h0.79M45.53,291.38h1.57M50.24,291.38h0.79M7.85,292.96h0.79M24.33,292.96h0.79M44.74,292.96h1.57M50.24,292.96h0.79M6.28,294.53h1.57M11.77,294.53h0.79M6.28,296.10h0.79M54.95,296.10h1.57M6.28,297.67h0.79M52.59,297.67h0.79M6.28,299.24h1.57M14.13,299.24h0.79M6.28,300.81h0.79M19.62,300.81h0.79M36.89,300.81h1.57M39.25,300.81h0.79M4.71,302.38h1.57M12.56,302.38h0.79M3.14,303.95h1.57M5.50,303.95h0.79M3.14,307.09h0.79M18.05,307.09h0.79M36.11,307.09h1.57M38.46,307.09h0.79M3.14,308.67h0.79M16.48,308.67h0.79M40.03,308.67h1.57M43.17,308.67h0.79M3.14,310.24h0.79M15.70,310.24h0.79M36.11,310.24h1.57M38.46,310.24h0.79M3.14,311.81h0.79M3.14,319.66h0.79M4.71,321.23h0.79M47.88,321.23h1.57M4.71,322.81h0.79M18.84,322.81h0.79M38.46,322.81h1.57M40.82,322.81h0.79M4.71,324.38h0.79M17.27,324.38h0.79M37.68,324.38h1.57M40.82,324.38h0.79M4.71,325.95h0.79M4.71,332.23h0.79M6.28,333.80h0.79M21.19,333.80h0.79M41.60,333.80h1.57M43.96,333.80h0.79M4.71,335.37h1.57M8.64,335.37h0.79M4.71,336.94h0.79M40.82,336.94h0.79M6.28,338.51h0.79M21.98,338.51h0.79M41.60,338.51h1.57M46.31,338.51h0.79M6.28,340.09h0.79M54.16,340.09h0.79M7.85,341.66h0.79M21.19,341.66h0.79M44.74,341.66h1.57M47.10,341.66h0.79M6.28,343.23h1.57M14.13,343.23h0.79M6.28,346.37h0.79M55.73,346.37h1.57M6.28,347.94h0.79M18.05,347.94h0.79M39.25,347.94h1.57M41.60,347.94h0.79M6.28,349.51h0.79M51.02,349.51h1.57M6.28,351.08h0.79M38.46,351.08h0.79M7.85,352.65h0.79M59.66,352.65h1.57M7.85,354.22h0.79M39.25,354.22h0.79M9.42,355.80h0.79M24.33,355.80h0.79M43.96,355.80h1.57M47.10,355.80h0.79M9.42,357.37h0.79M27.47,357.37h0.79M45.53,357.37h1.57M51.02,357.37h0.79M9.42,358.94h0.79M9.42,365.22h0.79M10.99,366.79h0.79M46.31,366.79h0.79M10.99,371.51h1.57M13.35,371.51h0.79M9.42,373.08h1.57M18.84,373.08h0.79M9.42,374.65h0.79M9.42,382.50h0.79M10.99,384.07h0.79M10.99,388.79h0.79M12.56,390.36h0.79M29.04,390.36h0.79M47.88,390.36h1.57M53.38,390.36h0.79M12.56,391.93h0.79M54.16,391.93h1.57M12.56,395.07h0.79M59.66,395.07h1.57M12.56,398.21h0.79M53.38,398.21h1.57M12.56,401.35h0.79M27.47,401.35h0.79M48.67,401.35h1.57M54.16,401.35h0.79M10.99,402.93h1.57M20.41,402.93h0.79M10.99,404.50h0.79M26.69,404.50h0.79M46.31,404.50h1.57M48.67,404.50h0.79M9.42,407.64h1.57M18.06,407.64h0.79M9.42,409.21h0.79M55.73,409.21h1.57M9.42,410.78h0.79M25.90,410.78h0.79M49.45,410.78h1.57M54.95,410.78h0.79M7.85,412.35h1.57M16.49,412.35h0.79M7.85,415.49h0.79M7.85,423.35h0.79M7.85,424.92h1.57M12.56,424.92h0.79M6.28,426.49h1.57M15.70,426.49h0.79M6.28,428.06h0.79M22.76,428.06h0.79M43.17,428.06h1.57M48.67,428.06h0.79M6.28,429.63h0.79M51.81,429.63h1.57M4.71,431.20h1.57M11.78,431.20h0.79M3.14,432.77h1.57M12.56,432.77h0.79M3.14,434.35h0.79M16.48,434.35h0.79M36.89,434.35h1.57M39.25,434.35h0.79M3.14,435.92h0.79M32.18,435.92h0.79M3.14,437.49h1.57M10.21,437.49h0.79M3.14,440.63h0.79M3.14,443.77h0.79M4.71,446.91h0.79M52.59,446.91h0.79M4.71,448.49h1.57M11.78,448.49h0.79M4.71,450.06h0.79M48.67,450.06h1.57M3.14,451.63h1.57M10.99,451.63h0.79M3.14,453.20h0.79M18.05,453.20h0.79M39.25,453.20h1.57M41.60,453.20h0.79M3.14,454.77h0.79M19.62,454.77h0.79M39.25,454.77h1.57M44.74,454.77h0.79M3.14,456.34h0.79M14.91,456.34h0.79M36.89,456.34h1.57M39.25,456.34h0.79M3.14,457.91h0.79M21.19,457.91h0.79M40.03,457.91h1.57M45.53,457.91h0.79M3.14,459.48h0.79M3.14,464.19h0.79M3.14,465.77h1.57M12.56,465.77h0.79M3.14,467.34h0.79M3.14,470.48h0.79M3.14,475.19h1.57M12.56,475.19h0.79M3.14,476.76h0.79M33.75,476.76h0.79M3.14,478.33h1.57M10.99,478.33h0.79M3.14,479.90h0.79M49.45,479.90h1.57M3.14,481.48h0.79M3.14,489.33h0.79" stroke="#808080" stroke-width="1.35" stroke-dasharray="0.68 0.11" fill="none"/><path d="M0.78,0.75h6.28M2.36,2.32h5.50M3.92,16.46h6.28M5.50,18.03h6.28M7.06,19.60h1.57M45.53,19.60h1.57M6.28,21.17h6.28M5.50,22.74h6.28M6.28,25.89h6.28M5.50,27.46h5.50M5.50,40.02h2.35M7.06,41.60h7.07M18.05,43.17h1.57M13.35,47.88h3.14M8.63,51.02h2.35M10.20,52.59h5.50M19.62,54.16h1.57M7.85,55.74h2.35M7.06,57.31h3.14M47.88,57.31h3.14M7.06,58.88h3.14M8.63,65.16h6.28M8.63,66.73h6.28M10.20,68.30h4.71M9.42,69.87h6.28M8.63,73.02h6.28M9.42,74.59h6.28M8.63,77.73h2.35M10.20,87.16h6.28M19.62,90.30h1.57M23.55,93.44h1.57M10.99,96.58h6.28M10.20,99.72h3.93M10.99,107.58h3.93M10.20,109.15h2.35M10.99,110.72h2.35M10.20,112.29h0.79M40.03,112.29h0.79M9.42,113.86h2.35M8.63,115.43h5.50M7.85,117.00h3.14M6.28,118.58h7.07M5.50,120.15h5.50M7.06,126.43h5.50M7.06,128.00h5.50M8.63,132.71h6.28M8.63,137.43h3.14M49.45,137.43h3.14M8.63,139.00h1.57M41.60,139.00h1.57M7.85,142.14h5.50M7.06,143.71h4.71M7.06,145.28h5.50M7.06,146.85h7.85M8.63,156.28h7.85M9.42,157.85h7.85M8.63,160.99h3.14M48.67,160.99h3.14M7.85,164.13h7.85M7.06,167.28h7.85M8.63,176.70h0.79M9.42,181.41h0.79M8.63,182.99h6.28M7.85,186.13h7.85M7.06,187.70h2.35M8.63,195.55h5.50M7.85,197.13h2.35M6.28,198.70h5.50M4.71,200.27h2.35M3.92,203.41h1.57M40.03,203.41h1.57M3.92,204.98h6.28M3.92,206.55h4.71M3.92,208.12h3.93M43.17,208.12h3.93M3.92,209.69h3.93M40.03,209.69h3.93M3.92,211.26h3.93M40.82,211.26h3.93M3.92,214.41h0.79M40.82,214.41h0.79M3.92,215.98h3.93M43.96,215.98h3.93M3.92,219.12h3.93M38.46,219.12h3.93M3.92,220.69h5.50M3.92,222.26h0.79M15.70,223.83h1.57M5.50,231.69h6.28M7.06,237.97h7.85M7.06,239.54h6.28M7.85,241.11h6.28M7.06,244.26h3.93M8.63,245.83h3.14M10.20,247.40h3.14M11.77,250.54h2.35M12.56,259.96h2.35M11.77,263.11h0.79M48.67,263.11h0.79M11.77,264.68h7.85M11.77,266.25h7.85M13.34,267.82h7.85M12.56,270.96h7.85M11.77,274.10h3.93M12.56,275.68h3.93M10.99,277.25h3.14M10.20,278.82h1.57M45.53,278.82h1.57M10.20,280.39h3.93M10.99,281.96h3.93M9.42,283.53h3.14M8.63,285.10h3.14M47.10,285.10h3.14M8.63,286.67h0.79M43.96,286.67h0.79M8.63,288.24h5.50M8.63,291.38h3.14M47.10,291.38h3.14M8.63,292.96h3.93M46.31,292.96h3.93M7.85,294.53h3.93M7.06,296.10h7.85M7.06,297.67h6.28M7.85,299.24h6.28M7.06,300.81h0.79M38.46,300.81h0.79M6.28,302.38h6.28M4.71,303.95h0.79M3.92,307.09h0.79M37.68,307.09h0.79M3.92,308.67h1.57M41.60,308.67h1.57M3.92,310.24h0.79M37.68,310.24h0.79M3.92,311.81h7.85M5.50,321.23h6.28M5.50,322.81h0.79M40.03,322.81h0.79M5.50,324.38h1.57M39.25,324.38h1.57M5.50,325.95h2.35M7.06,333.80h0.79M43.17,333.80h0.79M6.28,335.37h2.35M5.50,336.94h5.50M7.06,338.51h3.14M43.17,338.51h3.14M7.06,340.09h6.28M8.63,341.66h0.79M46.31,341.66h0.79M7.85,343.23h6.28M7.06,346.37h7.85M7.06,347.94h0.79M40.82,347.94h0.79M7.06,349.51h7.85M7.06,351.08h7.85M8.63,352.65h7.85M8.63,354.22h7.07M10.20,355.80h1.57M45.53,355.80h1.57M10.20,357.37h3.93M47.10,357.37h3.93M10.20,358.94h7.85M11.77,366.79h0.79M12.56,371.51h0.79M10.99,373.08h7.85M10.20,374.65h7.07M11.77,384.07h7.85M13.34,390.36h3.93M49.45,390.36h3.93M13.34,391.93h5.50M13.34,395.07h7.85M13.34,398.21h6.28M13.34,401.35h3.93M50.24,401.35h3.93M12.56,402.93h7.85M11.77,404.50h0.79M47.88,404.50h0.79M10.99,407.64h7.07M10.20,409.21h5.50M10.20,410.78h3.93M51.02,410.78h3.93M9.42,412.35h7.07M8.63,415.49h3.14M22.76,421.78h1.57M9.42,424.92h3.14M7.85,426.49h7.85M7.06,428.06h3.93M44.74,428.06h3.93M7.06,429.63h7.85M6.28,431.20h5.50M4.71,432.77h7.85M3.92,434.35h0.79M38.46,434.35h0.79M3.92,435.92h5.50M4.71,437.49h5.50M3.92,440.63h6.28M5.50,446.91h5.50M6.28,448.49h5.50M5.50,450.06h6.28M4.71,451.63h6.28M3.92,453.20h0.79M40.82,453.20h0.79M3.92,454.77h3.93M40.82,454.77h3.93M3.92,456.34h0.79M38.46,456.34h0.79M3.92,457.91h3.93M41.60,457.91h3.93M3.92,459.48h7.85M4.71,465.77h7.85M3.92,467.34h7.85M4.71,475.19h7.85M3.92,476.76h6.28M4.71,478.33h6.28M3.92,479.90h4.71M3.92,481.48h0.79" stroke="#569cd6" stroke-width="1.35" stroke-dasharray="0.68 0.11" fill="none"/><path d="M3.14,3.89h0.79M7.85,3.89h1.57M16.48,3.89h0.79M19.62,3.89h0.79M31.40,3.89h0.79M32.97,3.89h0.79M38.46,3.89h0.79M49.45,3.89h0.79M52.59,3.89h0.79M64.37,3.89h0.79M65.15,3.89h0.79M3.14,5.46h0.79M7.06,5.46h1.57M11.77,5.46h0.79M3.14,7.03h0.79M11.77,7.03h1.57M20.41,7.03h0.79M3.14,8.60h0.79M9.42,8.60h1.57M16.49,8.60h0.79M3.14,10.18h0.79M6.28,10.18h1.57M15.70,10.18h0.79M21.98,10.18h0.79M3.14,11.75h0.79M7.06,11.75h1.57M14.13,11.75h0.79M3.14,13.32h0.79M7.85,13.32h1.57M13.34,13.32h0.79M19.62,13.32h0.79M20.41,13.32h0.79M14.13,16.46h0.79M15.70,18.03h1.57M17.27,18.03h0.79M24.33,18.03h0.79M13.34,19.60h0.79M21.98,19.60h1.57M25.90,19.60h0.79M40.82,19.60h0.79M42.39,19.60h1.57M15.70,22.74h1.57M27.48,22.74h0.79M32.97,22.74h0.79M43.17,22.74h0.79M6.28,24.31h1.57M10.21,24.31h0.79M26.69,24.31h0.79M28.26,24.31h0.79M33.75,24.31h0.79M43.17,24.31h0.79M54.16,24.31h0.79M54.95,24.31h0.79M59.66,24.31h0.79M60.44,24.31h0.79M62.01,24.31h1.57M11.77,30.60h1.57M25.12,30.60h0.79M9.42,32.17h0.79M14.91,33.74h0.79M10.20,35.31h0.79M13.35,36.88h0.79M11.77,40.02h1.57M13.35,40.02h0.79M25.90,40.02h0.79M11.77,43.17h1.57M33.75,43.17h0.79M7.85,44.74h0.79M10.99,44.74h1.57M16.49,44.74h0.79M21.19,44.74h0.79M7.85,46.31h0.79M12.56,46.31h1.57M18.05,46.31h0.79M22.76,46.31h0.79M7.85,47.88h0.79M11.77,47.88h1.57M16.49,47.88h0.79M15.70,51.02h0.79M14.91,54.16h1.57M25.90,54.16h0.79M34.54,54.16h0.79M14.91,57.31h0.79M24.33,57.31h1.57M28.26,57.31h0.79M43.17,57.31h0.79M44.74,57.31h1.57M7.85,60.45h0.79M12.56,60.45h1.57M20.41,60.45h0.79M23.55,60.45h0.79M7.85,62.02h0.79M14.13,62.02h1.57M19.62,62.02h0.79M21.19,65.16h1.57M29.04,65.16h0.79M36.89,65.16h0.79M40.03,65.16h0.79M18.05,66.73h0.79M21.19,68.30h1.57M29.83,68.30h0.79M35.33,68.30h0.79M40.82,68.30h0.79M7.85,71.44h1.57M12.56,71.44h0.79M21.98,71.44h1.57M19.62,73.02h0.79M33.75,73.02h0.79M38.46,73.02h1.57M43.96,73.02h0.79M7.85,76.16h1.57M14.92,76.16h0.79M23.55,76.16h1.57M9.42,79.30h0.79M14.13,79.30h1.57M18.05,79.30h0.79M9.42,80.87h0.79M14.13,80.87h1.57M18.05,80.87h0.79M25.90,80.87h0.79M9.42,82.44h0.79M14.13,82.44h1.57M17.27,82.44h0.79M31.40,82.44h0.79M32.18,82.44h0.79M10.99,84.01h0.79M10.99,88.73h0.79M15.70,88.73h1.57M22.76,88.73h0.79M31.40,88.73h0.79M14.13,90.30h1.57M27.48,90.30h0.79M34.54,90.30h0.79M14.91,91.87h0.79M10.99,93.44h0.79M15.70,93.44h1.57M31.40,93.44h0.79M38.46,93.44h0.79M9.42,98.15h1.57M16.49,98.15h0.79M25.90,98.15h1.57M14.91,101.29h0.79M14.13,102.87h0.79M10.99,106.01h1.57M19.62,106.01h0.79M23.55,106.01h1.57M13.34,109.15h0.79M16.48,109.15h1.57M21.98,109.15h0.79M30.61,109.15h0.79M32.18,109.15h0.79M36.89,109.15h1.57M38.46,109.15h0.79M43.17,109.15h0.79M51.81,109.15h0.79M52.59,109.15h0.79M15.70,112.29h0.79M21.19,112.29h1.57M25.12,112.29h0.79M35.32,112.29h0.79M36.89,112.29h1.57M20.41,115.43h1.57M25.12,115.43h0.79M31.40,115.43h0.79M36.89,115.43h0.79M6.28,121.72h0.79M10.99,121.72h1.57M18.05,121.72h0.79M25.12,121.72h0.79M9.42,123.29h0.79M18.84,126.43h1.57M27.48,126.43h0.79M34.54,126.43h0.79M37.68,126.43h0.79M7.85,129.57h0.79M12.56,129.57h1.57M20.41,129.57h0.79M21.19,132.71h1.57M27.48,132.71h0.79M33.75,132.71h0.79M39.25,132.71h0.79M7.85,134.28h1.57M16.49,134.28h0.79M25.12,134.28h1.57M7.85,135.86h1.57M18.06,135.86h0.79M26.69,135.86h1.57M16.48,137.43h0.79M22.76,137.43h1.57M26.69,137.43h0.79M44.74,137.43h0.79M46.31,137.43h1.57M14.91,139.00h0.79M20.41,139.00h1.57M24.33,139.00h0.79M36.89,139.00h0.79M38.46,139.00h1.57M7.85,140.57h1.57M16.49,140.57h0.79M22.76,140.57h1.57M18.05,143.71h1.57M25.90,143.71h0.79M32.97,143.71h0.79M36.11,143.71h0.79M18.84,145.28h1.57M25.12,145.28h0.79M32.18,145.28h0.79M37.68,145.28h0.79M11.77,148.42h0.79M11.77,150.00h1.57M18.06,150.00h0.79M7.85,151.57h0.79M12.56,151.57h1.57M17.27,151.57h0.79M10.99,153.14h1.57M18.06,153.14h0.79M26.69,153.14h0.79M21.19,156.28h0.79M35.32,156.28h0.79M40.03,156.28h1.57M44.74,156.28h0.79M7.85,159.42h1.57M16.49,159.42h0.79M21.19,159.42h1.57M16.48,160.99h0.79M24.33,160.99h1.57M28.26,160.99h0.79M43.96,160.99h0.79M45.53,160.99h1.57M7.85,162.56h1.57M16.49,162.56h0.79M24.33,162.56h1.57M6.28,165.70h1.57M11.77,165.70h0.79M19.62,165.70h1.57M11.77,168.85h0.79M7.85,170.42h0.79M10.99,170.42h1.57M15.70,170.42h0.79M19.62,170.42h0.79M7.85,171.99h0.79M12.56,171.99h1.57M20.41,171.99h0.79M27.47,171.99h0.79M7.85,175.13h1.57M14.92,175.13h0.79M21.98,175.13h1.57M14.91,178.27h1.57M22.76,178.27h0.79M21.19,182.99h1.57M25.90,182.99h0.79M34.54,182.99h0.79M40.03,182.99h0.79M7.85,184.56h1.57M13.35,184.56h0.79M18.05,184.56h1.57M13.35,189.27h1.57M19.63,189.27h0.79M7.85,190.84h0.79M14.13,190.84h1.57M23.55,190.84h0.79M28.26,190.84h0.79M11.77,192.41h0.79M20.41,195.55h1.57M27.48,195.55h0.79M32.18,195.55h0.79M37.68,195.55h0.79M3.14,201.84h1.57M10.99,201.84h0.79M14.91,201.84h1.57M10.20,203.41h0.79M17.27,203.41h1.57M21.19,203.41h0.79M35.32,203.41h0.79M36.89,203.41h1.57M16.48,204.98h1.57M22.76,204.98h0.79M26.69,204.98h0.79M29.83,204.98h0.79M14.91,206.55h1.57M24.34,206.55h0.79M32.97,206.55h0.79M38.46,206.55h0.79M12.56,208.12h0.79M21.98,208.12h1.57M25.90,208.12h0.79M38.46,208.12h0.79M40.03,208.12h1.57M12.56,209.69h0.79M18.84,209.69h1.57M22.76,209.69h0.79M35.32,209.69h0.79M36.89,209.69h1.57M12.56,211.26h0.79M21.19,211.26h1.57M25.12,211.26h0.79M36.11,211.26h0.79M37.68,211.26h1.57M3.14,212.84h1.57M9.42,212.84h0.79M14.13,212.84h1.57M9.42,214.41h0.79M18.84,214.41h1.57M22.76,214.41h0.79M36.11,214.41h0.79M37.68,214.41h1.57M12.56,215.98h0.79M18.84,215.98h1.57M22.76,215.98h0.79M39.25,215.98h0.79M40.82,215.98h1.57M3.14,217.55h1.57M9.42,217.55h0.79M14.13,217.55h1.57M12.56,219.12h0.79M19.62,219.12h1.57M23.55,219.12h0.79M33.75,219.12h0.79M35.32,219.12h1.57M15.70,220.69h1.57M23.55,220.69h0.79M30.61,220.69h0.79M35.32,220.69h0.79M10.21,223.83h1.57M21.20,223.83h0.79M29.83,223.83h0.79M4.71,225.40h0.79M7.85,225.40h1.57M10.99,225.40h0.79M23.55,225.40h0.79M24.34,225.40h0.79M7.85,226.97h1.57M15.70,226.97h0.79M6.28,228.54h0.79M7.85,233.26h0.79M9.42,234.83h1.57M17.27,234.83h0.79M21.19,237.97h1.57M26.69,237.97h0.79M32.18,237.97h0.79M35.32,237.97h0.79M17.27,239.54h1.57M22.76,239.54h0.79M26.69,239.54h0.79M6.28,242.68h1.57M14.91,242.68h0.79M24.33,242.68h1.57M15.70,244.26h0.79M29.04,244.26h0.79M33.75,244.26h1.57M43.17,244.26h0.79M12.56,245.83h0.79M15.70,245.83h1.57M21.19,245.83h0.79M26.69,245.83h0.79M16.48,247.40h0.79M10.99,248.97h1.57M18.06,248.97h0.79M24.34,248.97h1.57M12.56,252.11h0.79M17.27,252.11h1.57M22.76,252.11h0.79M29.83,252.11h0.79M15.70,253.68h1.57M23.55,253.68h0.79M29.83,253.68h0.79M16.48,255.25h1.57M24.33,255.25h0.79M15.70,256.82h1.57M23.55,256.82h0.79M28.26,256.82h0.79M10.99,261.54h1.57M18.84,261.54h0.79M23.55,261.54h1.57M17.27,263.11h0.79M24.33,263.11h1.57M28.26,263.11h0.79M43.96,263.11h0.79M45.53,263.11h1.57M25.90,264.68h1.57M30.62,264.68h0.79M35.32,264.68h0.79M38.46,264.68h0.79M20.41,266.25h0.79M23.55,266.25h1.57M31.40,266.25h0.79M36.11,266.25h0.79M27.47,267.82h1.57M33.75,267.82h0.79M38.46,267.82h0.79M43.96,267.82h0.79M12.56,269.39h1.57M18.84,269.39h0.79M24.33,269.39h1.57M10.99,272.53h1.57M18.06,272.53h0.79M24.34,272.53h1.57M20.41,274.10h0.79M31.40,274.10h0.79M36.11,274.10h1.57M37.68,274.10h0.79M44.74,274.10h0.79M52.59,274.10h0.79M53.38,274.10h0.79M16.48,278.82h0.79M25.90,278.82h1.57M29.83,278.82h0.79M40.82,278.82h0.79M42.39,278.82h1.57M18.05,280.39h1.57M25.12,280.39h0.79M29.04,280.39h0.79M30.61,280.39h0.79M35.32,280.39h1.57M43.96,280.39h0.79M16.48,285.10h0.79M23.55,285.10h1.57M27.47,285.10h0.79M42.39,285.10h0.79M43.96,285.10h1.57M14.13,286.67h0.79M19.62,286.67h1.57M23.55,286.67h0.79M39.25,286.67h0.79M40.82,286.67h1.57M20.41,288.24h1.57M25.12,288.24h0.79M29.83,288.24h0.79M34.54,288.24h0.79M7.85,289.81h1.57M16.49,289.81h0.79M24.33,289.81h1.57M16.48,291.38h0.79M24.33,291.38h1.57M28.26,291.38h0.79M42.39,291.38h0.79M43.96,291.38h1.57M17.27,292.96h0.79M25.12,292.96h1.57M29.04,292.96h0.79M41.60,292.96h0.79M43.17,292.96h1.57M21.19,296.10h1.57M27.48,296.10h0.79M36.11,296.10h0.79M39.25,296.10h0.79M17.27,297.67h1.57M25.12,297.67h0.79M30.61,297.67h0.79M32.18,297.67h0.79M36.89,297.67h1.57M38.46,297.67h0.79M43.96,297.67h0.79M51.02,297.67h0.79M51.81,297.67h0.79M12.56,300.81h0.79M20.41,300.81h1.57M24.33,300.81h0.79M33.75,300.81h0.79M35.32,300.81h1.57M3.14,305.52h1.57M9.42,305.52h0.79M14.91,305.52h1.57M9.42,307.09h0.79M18.84,307.09h1.57M22.76,307.09h0.79M32.97,307.09h0.79M34.54,307.09h1.57M10.20,308.67h0.79M17.27,308.67h1.57M21.19,308.67h0.79M36.89,308.67h0.79M38.46,308.67h1.57M9.42,310.24h0.79M16.48,310.24h1.57M20.41,310.24h0.79M32.97,310.24h0.79M34.54,310.24h1.57M10.21,313.38h1.57M18.06,313.38h0.79M26.69,313.38h0.79M7.85,314.95h0.79M8.63,316.52h1.57M14.13,316.52h0.79M6.28,318.09h0.79M18.05,321.23h1.57M25.12,321.23h0.79M29.04,321.23h0.79M34.54,321.23h0.79M10.99,322.81h0.79M19.62,322.81h1.57M23.55,322.81h0.79M35.32,322.81h0.79M36.89,322.81h1.57M11.77,324.38h0.79M18.05,324.38h1.57M21.98,324.38h0.79M34.54,324.38h0.79M36.11,324.38h1.57M6.28,327.52h0.79M10.99,327.52h1.57M14.91,327.52h0.79M6.28,329.09h0.79M10.99,329.09h1.57M17.27,329.09h0.79M9.42,330.66h0.79M12.56,333.80h0.79M21.98,333.80h1.57M25.90,333.80h0.79M38.46,333.80h0.79M40.03,333.80h1.57M11.77,336.94h0.79M14.91,336.94h1.57M21.20,336.94h0.79M28.26,336.94h0.79M29.83,336.94h0.79M34.54,336.94h1.57M40.03,336.94h0.79M14.91,338.51h0.79M22.76,338.51h1.57M26.69,338.51h0.79M38.46,338.51h0.79M40.03,338.51h1.57M16.48,340.09h0.79M32.18,340.09h0.79M36.89,340.09h1.57M38.46,340.09h0.79M44.74,340.09h0.79M52.59,340.09h0.79M53.38,340.09h0.79M14.13,341.66h0.79M21.98,341.66h1.57M25.90,341.66h0.79M41.60,341.66h0.79M43.17,341.66h1.57M6.28,344.80h1.57M12.56,344.80h0.79M19.62,344.80h1.57M21.19,346.37h1.57M28.26,346.37h0.79M32.97,346.37h0.79M37.68,346.37h0.79M12.56,347.94h0.79M18.84,347.94h1.57M22.76,347.94h0.79M36.11,347.94h0.79M37.68,347.94h1.57M21.19,349.51h1.57M29.04,349.51h0.79M34.54,349.51h0.79M40.03,349.51h0.79M19.62,351.08h0.79M22.76,352.65h1.57M27.48,352.65h0.79M34.54,352.65h0.79M40.03,352.65h0.79M16.49,354.22h0.79M19.62,354.22h1.57M28.26,354.22h0.79M32.97,354.22h0.79M16.48,355.80h0.79M25.12,355.80h1.57M29.04,355.80h0.79M40.82,355.80h0.79M42.39,355.80h1.57M18.84,357.37h0.79M28.26,357.37h1.57M32.18,357.37h0.79M42.39,357.37h0.79M43.96,357.37h1.57M10.99,360.51h0.79M15.70,360.51h1.57M24.34,360.51h0.79M10.99,362.08h0.79M17.27,362.08h1.57M25.12,362.08h0.79M29.83,362.08h0.79M10.99,363.65h0.79M15.70,363.65h1.57M23.55,363.65h0.79M29.04,363.65h0.79M17.27,366.79h0.79M35.32,366.79h0.79M40.03,366.79h1.57M45.53,366.79h0.79M12.56,368.36h1.57M18.05,368.36h0.79M21.98,368.36h1.57M12.56,369.94h1.57M21.19,369.94h0.79M28.26,369.94h1.57M14.91,376.22h1.57M20.41,376.22h0.79M14.91,377.79h1.57M21.20,377.79h0.79M28.26,377.79h0.79M10.99,379.36h0.79M14.13,379.36h1.57M20.41,379.36h0.79M25.12,379.36h0.79M14.91,380.93h1.57M18.06,380.93h0.79M29.83,380.93h0.79M30.62,380.93h0.79M14.91,385.64h0.79M16.48,387.22h0.79M21.98,390.36h0.79M29.83,390.36h1.57M33.75,390.36h0.79M44.74,390.36h0.79M46.31,390.36h1.57M25.12,391.93h1.57M31.40,391.93h0.79M36.11,391.93h0.79M40.82,391.93h0.79M12.56,393.50h1.57M18.05,393.50h0.79M23.55,393.50h1.57M27.47,395.07h1.57M32.97,395.07h0.79M38.46,395.07h0.79M43.96,395.07h0.79M12.56,396.64h1.57M21.19,396.64h0.79M26.69,396.64h1.57M25.90,398.21h1.57M33.75,398.21h0.79M38.46,398.21h0.79M43.17,398.21h0.79M12.56,399.78h1.57M18.84,399.78h0.79M23.55,399.78h1.57M21.98,401.35h0.79M28.26,401.35h1.57M32.18,401.35h0.79M45.53,401.35h0.79M47.10,401.35h1.57M17.27,404.50h0.79M27.47,404.50h1.57M31.40,404.50h0.79M43.17,404.50h0.79M44.74,404.50h1.57M10.99,406.07h1.57M15.70,406.07h0.79M22.76,406.07h1.57M21.98,409.21h1.57M28.26,409.21h0.79M36.89,409.21h0.79M41.60,409.21h0.79M18.84,410.78h0.79M26.69,410.78h1.57M30.61,410.78h0.79M46.31,410.78h0.79M47.88,410.78h1.57M7.85,413.92h1.57M12.56,413.92h0.79M20.41,413.92h1.57M13.34,417.06h1.57M16.49,417.06h0.79M30.62,417.06h0.79M31.40,417.06h0.79M9.42,418.64h0.79M14.13,418.64h1.57M17.27,418.64h0.79M28.26,418.64h0.79M29.04,418.64h0.79M9.42,420.21h0.79M14.13,420.21h1.57M21.19,420.21h0.79M14.91,421.78h1.57M31.40,421.78h0.79M35.32,421.78h0.79M15.70,428.06h0.79M23.55,428.06h1.57M27.47,428.06h0.79M40.03,428.06h0.79M41.60,428.06h1.57M21.19,429.63h1.57M28.26,429.63h0.79M34.54,429.63h0.79M39.25,429.63h0.79M9.42,434.35h0.79M17.27,434.35h1.57M21.19,434.35h0.79M33.75,434.35h0.79M35.32,434.35h1.57M13.34,435.92h1.57M19.62,435.92h0.79M25.90,435.92h0.79M3.14,439.06h1.57M13.35,439.06h0.79M22.76,439.06h1.57M4.71,442.20h0.79M9.42,442.20h1.57M17.27,442.20h0.79M4.71,445.34h1.57M10.21,445.34h0.79M17.27,445.34h1.57M14.13,446.91h0.79M27.47,446.91h0.79M32.18,446.91h1.57M33.75,446.91h0.79M41.60,446.91h0.79M51.02,446.91h0.79M51.81,446.91h0.79M18.05,450.06h1.57M24.34,450.06h0.79M31.40,450.06h0.79M34.54,450.06h0.79M9.42,453.20h0.79M18.84,453.20h1.57M22.76,453.20h0.79M36.11,453.20h0.79M37.68,453.20h1.57M12.56,454.77h0.79M20.41,454.77h1.57M24.33,454.77h0.79M36.11,454.77h0.79M37.68,454.77h1.57M9.42,456.34h0.79M15.70,456.34h1.57M19.62,456.34h0.79M33.75,456.34h0.79M35.32,456.34h1.57M12.56,457.91h0.79M21.98,457.91h1.57M25.90,457.91h0.79M36.89,457.91h0.79M38.46,457.91h1.57M7.07,461.05h0.79M4.71,462.62h0.79M9.42,462.62h1.57M18.84,462.62h0.79M21.98,462.62h0.79M6.28,468.91h0.79M4.71,472.05h1.57M11.78,472.05h0.79M18.06,472.05h1.57M4.71,473.62h1.57M10.99,473.62h0.79M20.41,473.62h1.57M14.91,476.76h0.79M14.91,479.90h1.57M22.76,479.90h0.79M31.40,479.90h0.79M34.54,479.90h0.79M4.71,483.05h0.79M9.42,483.05h1.57M18.84,483.05h0.79M7.85,484.62h1.57M10.99,484.62h0.79M22.77,484.62h0.79M23.55,484.62h0.79M4.71,486.19h0.79M9.42,486.19h1.57M15.70,486.19h0.79M7.07,487.76h0.79M4.71,490.90h1.57M13.35,490.90h0.79M22.76,490.90h1.57" stroke="#d4d4d4" stroke-width="1.35" stroke-dasharray="0.68 0.11" fill="none"/><path d="M3.92,3.89h3.93M9.42,3.89h6.28M40.03,3.89h8.63M3.92,5.46h3.14M8.63,5.46h3.14M3.92,7.03h7.85M13.35,7.03h7.07M3.92,8.60h5.50M10.99,8.60h5.50M3.92,10.18h2.35M7.85,10.18h7.07M17.27,10.18h4.71M3.92,11.75h3.14M8.63,11.75h5.50M3.92,13.32h3.93M10.99,16.46h3.14M12.56,18.03h3.14M18.05,18.03h6.28M9.42,19.60h3.93M12.56,22.74h3.14M17.27,22.74h10.21M29.04,22.74h3.93M39.25,22.74h3.93M29.83,24.31h3.93M35.32,24.31h7.85M43.96,24.31h10.21M55.73,24.31h3.14M6.28,29.03h4.71M6.28,30.60h5.50M13.35,30.60h11.78M6.28,32.17h3.14M6.28,33.74h8.63M6.28,35.31h3.93M6.28,36.88h7.07M8.63,40.02h3.14M14.13,40.02h11.78M7.85,43.17h3.93M13.35,43.17h3.93M20.41,43.17h13.35M8.63,44.74h2.35M12.56,44.74h3.93M17.27,44.74h3.93M8.63,46.31h3.93M14.13,46.31h3.93M18.84,46.31h3.93M8.63,47.88h3.14M11.77,51.02h3.93M10.99,54.16h3.93M16.49,54.16h2.35M21.98,54.16h3.93M26.69,54.16h7.85M10.99,57.31h3.93M8.63,60.45h3.93M14.13,60.45h6.28M21.19,60.45h2.35M8.63,62.02h5.50M15.70,62.02h3.93M15.70,65.16h5.50M22.76,65.16h6.28M29.83,65.16h7.07M38.46,65.16h1.57M15.70,66.73h2.35M32.97,66.73h4.71M15.70,68.30h5.50M22.76,68.30h7.07M30.62,68.30h4.71M36.89,68.30h3.93M10.21,71.44h2.35M13.35,71.44h7.85M15.70,73.02h3.93M34.54,73.02h3.93M40.03,73.02h3.93M10.21,76.16h4.71M15.70,76.16h7.07M10.20,79.30h3.93M15.70,79.30h2.35M10.20,80.87h3.93M15.70,80.87h2.35M18.84,80.87h7.07M10.20,82.44h3.93M9.42,84.01h1.57M11.77,88.73h3.93M17.27,88.73h5.50M23.55,88.73h7.85M10.99,90.30h3.14M15.70,90.30h3.14M21.98,90.30h5.50M28.26,90.30h6.28M10.99,91.87h3.93M11.77,93.44h3.93M17.27,93.44h5.50M25.90,93.44h5.50M32.18,93.44h6.28M11.77,98.15h4.71M17.27,98.15h7.85M10.99,101.29h3.93M10.99,102.87h3.14M13.35,106.01h6.28M20.41,106.01h2.35M14.13,109.15h2.35M18.05,109.15h3.93M22.76,109.15h7.85M32.97,109.15h3.93M40.03,109.15h3.14M44.74,109.15h6.28M11.77,112.29h3.93M14.91,115.43h5.50M21.98,115.43h3.14M25.90,115.43h5.50M32.97,115.43h3.93M7.06,121.72h3.93M12.56,121.72h5.50M18.84,121.72h6.28M6.28,123.29h3.14M13.34,126.43h5.50M20.41,126.43h7.07M28.26,126.43h6.28M36.11,126.43h1.57M8.63,129.57h3.93M14.13,129.57h6.28M15.70,132.71h5.50M22.76,132.71h4.71M28.26,132.71h5.50M35.32,132.71h3.93M10.21,134.28h6.28M17.27,134.28h7.07M10.21,135.86h7.85M18.84,135.86h7.07M12.56,137.43h3.93M10.99,139.00h3.93M10.21,140.57h6.28M17.27,140.57h4.71M12.56,143.71h5.50M19.62,143.71h6.28M26.69,143.71h6.28M34.54,143.71h1.57M13.34,145.28h5.50M20.41,145.28h4.71M25.90,145.28h6.28M33.75,145.28h3.93M7.85,148.42h3.93M7.85,150.00h3.93M13.35,150.00h4.71M8.63,151.57h3.93M14.13,151.57h3.14M7.85,153.14h3.14M12.56,153.14h5.50M18.84,153.14h7.85M17.27,156.28h3.93M36.11,156.28h3.93M41.60,156.28h3.14M10.21,159.42h6.28M17.27,159.42h3.14M12.56,160.99h3.93M10.21,162.56h6.28M17.27,162.56h6.28M8.63,165.70h3.14M12.56,165.70h6.28M7.85,168.85h3.93M8.63,170.42h2.35M12.56,170.42h3.14M16.49,170.42h3.14M8.63,171.99h3.93M14.13,171.99h6.28M21.19,171.99h6.28M10.21,175.13h4.71M15.70,175.13h5.50M9.42,178.27h5.50M16.49,178.27h6.28M15.70,182.99h5.50M22.76,182.99h3.14M26.69,182.99h7.85M36.11,182.99h3.93M10.21,184.56h3.14M14.13,184.56h3.14M7.85,189.27h5.50M14.92,189.27h4.71M8.63,190.84h5.50M15.70,190.84h7.85M24.34,190.84h3.93M7.85,192.41h3.93M14.91,195.55h5.50M21.98,195.55h5.50M28.26,195.55h3.93M33.75,195.55h3.93M5.50,201.84h5.50M11.77,201.84h2.35M6.28,203.41h3.93M10.99,204.98h5.50M18.05,204.98h4.71M23.55,204.98h3.14M28.26,204.98h1.57M9.42,206.55h5.50M16.49,206.55h7.85M25.12,206.55h7.85M34.54,206.55h3.93M8.63,208.12h3.93M8.63,209.69h3.93M8.63,211.26h3.93M5.50,212.84h3.93M10.20,212.84h3.14M5.49,214.41h3.93M8.63,215.98h3.93M5.50,217.55h3.93M10.20,217.55h3.14M8.63,219.12h3.93M10.20,220.69h5.50M17.27,220.69h6.28M24.33,220.69h6.28M32.18,220.69h3.14M4.71,223.83h5.50M11.78,223.83h3.14M18.06,223.83h3.14M21.98,223.83h7.85M5.50,225.40h2.35M4.71,226.97h3.14M9.42,226.97h6.28M4.71,228.54h1.57M6.28,233.26h1.57M6.28,234.83h3.14M10.99,234.83h6.28M15.70,237.97h5.50M22.76,237.97h3.93M27.47,237.97h4.71M33.75,237.97h1.57M14.13,239.54h3.14M18.84,239.54h3.93M23.55,239.54h3.14M28.26,239.54h4.71M8.63,242.68h6.28M15.70,242.68h7.85M11.77,244.26h3.93M29.83,244.26h3.93M35.32,244.26h7.85M13.34,245.83h2.35M17.27,245.83h3.93M21.98,245.83h4.71M28.26,245.83h4.71M14.13,247.40h2.35M29.04,247.40h4.71M13.35,248.97h4.71M18.84,248.97h4.71M13.34,252.11h3.93M18.84,252.11h3.93M23.55,252.11h6.28M12.56,253.68h3.14M17.27,253.68h6.28M24.33,253.68h5.50M12.56,255.25h3.93M18.05,255.25h6.28M12.56,256.82h3.14M17.27,256.82h6.28M24.33,256.82h3.93M13.35,261.54h5.50M19.62,261.54h3.14M13.34,263.11h3.93M20.41,264.68h5.50M27.48,264.68h3.14M31.40,264.68h3.93M36.89,264.68h1.57M21.19,266.25h2.35M25.12,266.25h6.28M32.18,266.25h3.93M37.68,266.25h4.71M21.98,267.82h5.50M29.04,267.82h4.71M34.54,267.82h3.93M40.03,267.82h3.93M14.91,269.39h3.93M19.62,269.39h3.93M13.35,272.53h4.71M18.84,272.53h4.71M16.48,274.10h3.93M32.18,274.10h3.93M39.25,274.10h5.50M46.31,274.10h5.50M12.56,278.82h3.93M14.91,280.39h3.14M19.62,280.39h5.50M25.90,280.39h3.14M31.40,280.39h3.93M36.89,280.39h7.07M12.56,285.10h3.93M10.20,286.67h3.93M14.91,288.24h5.50M21.98,288.24h3.14M25.90,288.24h3.93M31.40,288.24h3.14M10.21,289.81h6.28M17.27,289.81h6.28M12.56,291.38h3.93M13.34,292.96h3.93M15.70,296.10h5.50M22.76,296.10h4.71M28.26,296.10h7.85M37.68,296.10h1.57M14.13,297.67h3.14M18.84,297.67h6.28M25.90,297.67h4.71M32.97,297.67h3.93M40.03,297.67h3.93M45.53,297.67h4.71M8.63,300.81h3.93M5.50,305.52h3.93M10.20,305.52h3.93M5.49,307.09h3.93M6.28,308.67h3.93M5.49,310.24h3.93M4.71,313.38h5.50M11.78,313.38h6.28M18.84,313.38h7.85M4.71,314.95h3.14M4.71,316.52h3.93M10.21,316.52h3.93M4.71,318.09h1.57M12.56,321.23h5.50M19.62,321.23h5.50M25.90,321.23h3.14M30.61,321.23h3.93M7.06,322.81h3.93M7.85,324.38h3.93M7.06,327.52h3.93M12.56,327.52h2.35M7.06,329.09h3.93M12.56,329.09h4.71M6.28,330.66h3.14M8.63,333.80h3.93M12.56,336.94h2.35M16.49,336.94h4.71M21.98,336.94h6.28M30.61,336.94h3.93M36.11,336.94h3.93M10.99,338.51h3.93M14.13,340.09h2.35M32.97,340.09h3.93M40.03,340.09h4.71M46.31,340.09h5.50M10.20,341.66h3.93M8.63,344.80h3.93M13.34,344.80h5.50M15.70,346.37h5.50M22.76,346.37h5.50M29.04,346.37h3.93M34.54,346.37h3.14M8.63,347.94h3.93M15.70,349.51h5.50M22.76,349.51h6.28M29.83,349.51h4.71M36.11,349.51h3.93M15.70,351.08h3.93M33.75,351.08h4.71M17.27,352.65h5.50M24.34,352.65h3.14M28.26,352.65h6.28M36.11,352.65h3.93M17.27,354.22h2.35M21.20,354.22h7.07M29.05,354.22h3.93M34.54,354.22h4.71M12.56,355.80h3.93M14.91,357.37h3.93M11.77,360.51h3.93M17.27,360.51h7.07M11.77,362.08h5.50M18.84,362.08h6.28M25.90,362.08h3.93M11.77,363.65h3.93M17.27,363.65h6.28M24.33,363.65h4.71M13.34,366.79h3.93M36.11,366.79h3.93M41.60,366.79h3.93M14.91,368.36h3.14M18.84,368.36h2.35M14.91,369.94h6.28M21.98,369.94h5.50M10.99,376.22h3.93M16.49,376.22h3.93M10.99,377.79h3.93M16.49,377.79h4.71M21.98,377.79h6.28M11.77,379.36h2.35M15.70,379.36h4.71M21.20,379.36h3.93M10.99,380.93h3.93M12.56,385.64h2.35M12.56,387.22h3.93M18.05,390.36h3.93M19.62,391.93h5.50M26.69,391.93h4.71M32.18,391.93h3.93M37.68,391.93h3.14M14.91,393.50h3.14M18.84,393.50h3.93M21.98,395.07h5.50M29.04,395.07h3.93M33.75,395.07h4.71M40.03,395.07h3.93M14.91,396.64h6.28M21.98,396.64h3.93M20.41,398.21h5.50M27.47,398.21h6.28M34.54,398.21h3.93M40.03,398.21h3.14M14.91,399.78h3.93M19.62,399.78h3.14M18.05,401.35h3.93M13.34,404.50h3.93M13.35,406.07h2.35M16.49,406.07h5.50M16.48,409.21h5.50M23.55,409.21h4.71M29.04,409.21h7.85M38.46,409.21h3.14M14.91,410.78h3.93M10.21,413.92h2.35M13.35,413.92h6.28M9.42,417.06h3.93M10.20,418.64h3.93M10.20,420.21h3.93M15.70,420.21h5.50M9.42,421.78h5.50M16.49,421.78h5.50M25.12,421.78h6.28M32.18,421.78h3.14M11.77,428.06h3.93M15.70,429.63h5.50M22.76,429.63h5.50M29.04,429.63h5.50M36.11,429.63h3.14M5.49,434.35h3.93M10.20,435.92h3.14M14.91,435.92h4.71M20.41,435.92h5.50M27.47,435.92h4.71M5.50,439.06h7.85M14.13,439.06h7.85M5.50,442.20h3.93M10.99,442.20h6.28M7.07,445.34h3.14M10.99,445.34h5.50M11.77,446.91h2.35M28.26,446.91h3.93M35.32,446.91h6.28M43.17,446.91h7.07M12.56,450.06h5.50M19.62,450.06h4.71M25.12,450.06h6.28M32.97,450.06h1.57M5.49,453.20h3.93M8.63,454.77h3.93M5.49,456.34h3.93M8.63,457.91h3.93M4.71,461.05h2.35M5.50,462.62h3.93M10.99,462.62h7.85M19.62,462.62h2.35M4.71,468.91h1.57M7.07,472.05h4.71M12.56,472.05h4.71M7.07,473.62h3.93M11.77,473.62h7.85M10.99,476.76h3.93M29.04,476.76h4.71M9.42,479.90h5.50M16.49,479.90h6.28M23.55,479.90h7.85M32.97,479.90h1.57M5.50,483.05h3.93M10.99,483.05h7.85M4.71,484.62h3.14M5.50,486.19h3.93M10.99,486.19h4.71M4.71,487.76h2.35M7.07,490.90h6.28M14.13,490.90h7.85" stroke="#9cdcfe" stroke-width="1.35" stroke-dasharray="0.68 0.11" fill="none"/><path d="M18.05,3.89h1.57M51.02,3.89h1.57M9.42,13.32h3.93M24.33,19.60h1.57M8.63,24.31h1.57M26.69,57.31h1.57M15.70,82.44h1.57M23.55,112.29h1.57M25.12,137.43h1.57M22.76,139.00h1.57M26.69,160.99h1.57M19.62,203.41h1.57M24.33,208.12h1.57M21.19,209.69h1.57M23.55,211.26h1.57M21.19,214.41h1.57M21.19,215.98h1.57M21.98,219.12h1.57M9.42,225.40h1.57M26.69,263.11h1.57M28.26,278.82h1.57M25.90,285.10h1.57M21.98,286.67h1.57M26.69,291.38h1.57M27.47,292.96h1.57M22.76,300.81h1.57M21.19,307.09h1.57M19.62,308.67h1.57M18.84,310.24h1.57M21.98,322.81h1.57M20.41,324.38h1.57M24.33,333.80h1.57M25.12,338.51h1.57M24.33,341.66h1.57M21.19,347.94h1.57M27.47,355.80h1.57M30.61,357.37h1.57M16.49,380.93h1.57M32.18,390.36h1.57M30.61,401.35h1.57M29.83,404.50h1.57M29.04,410.78h1.57M14.91,417.06h1.57M15.70,418.64h1.57M25.90,428.06h1.57M19.62,434.35h1.57M21.19,453.20h1.57M22.76,454.77h1.57M18.05,456.34h1.57M24.33,457.91h1.57M9.42,484.62h1.57" stroke="#dcdcaa" stroke-width="1.35" stroke-dasharray="0.68 0.11" fill="none"/><path d="M20.41,3.89h10.99M34.54,3.89h1.57M36.89,3.89h0.79M53.38,3.89h10.99M14.13,13.32h5.50M14.91,16.46h8.63M14.13,19.60h7.07M26.69,19.60h14.13M33.75,22.74h4.71M43.96,22.74h15.70M10.99,24.31h15.70M10.20,32.17h4.71M15.70,33.74h3.93M20.41,33.74h1.57M22.76,33.74h10.21M10.99,35.31h14.13M14.13,36.88h6.28M16.48,51.02h9.42M15.70,57.31h7.85M29.04,57.31h14.13M40.82,65.16h8.63M18.84,66.73h13.35M41.60,68.30h14.13M20.41,73.02h12.56M18.05,82.44h13.35M11.77,84.01h7.07M15.70,91.87h8.63M15.70,101.29h5.50M14.91,102.87h7.07M16.48,112.29h3.93M25.90,112.29h9.42M37.68,115.43h11.78M10.20,123.29h7.85M18.84,123.29h1.57M21.19,123.29h11.78M38.46,126.43h9.42M40.03,132.71h11.78M17.27,137.43h4.71M27.47,137.43h17.27M15.70,139.00h3.93M25.12,139.00h11.78M36.89,143.71h8.63M38.46,145.28h14.13M12.56,148.42h12.56M21.98,156.28h12.56M17.27,160.99h6.28M29.04,160.99h14.92M12.56,168.85h13.35M40.82,182.99h10.99M12.56,192.41h7.85M38.46,195.55h12.56M10.99,203.41h5.50M21.98,203.41h13.35M30.61,204.98h10.99M39.25,206.55h12.56M13.34,208.12h7.85M26.69,208.12h11.78M13.34,209.69h4.71M23.55,209.69h11.78M13.34,211.26h7.07M25.90,211.26h10.21M10.20,214.41h7.85M23.55,214.41h12.56M13.34,215.98h4.71M23.55,215.98h15.70M13.34,219.12h5.50M24.33,219.12h9.42M36.11,220.69h8.63M11.78,225.40h11.78M7.07,228.54h14.13M8.63,233.26h7.07M36.11,237.97h12.56M16.48,244.26h11.78M17.27,247.40h10.99M18.05,263.11h5.50M29.04,263.11h14.92M39.25,264.68h9.42M44.74,267.82h13.35M21.19,274.10h9.42M17.27,278.82h7.85M30.61,278.82h10.21M17.27,285.10h5.50M28.26,285.10h14.13M14.91,286.67h3.93M24.33,286.67h14.92M35.32,288.24h10.99M17.27,291.38h6.28M29.04,291.38h13.35M18.05,292.96h6.28M29.83,292.96h11.78M40.03,296.10h14.13M13.34,300.81h6.28M25.12,300.81h8.63M10.20,307.09h7.85M23.55,307.09h9.42M10.99,308.67h5.50M21.98,308.67h14.92M10.20,310.24h5.50M21.19,310.24h11.78M8.63,314.95h5.50M7.07,318.09h7.85M35.32,321.23h11.78M11.77,322.81h7.07M24.33,322.81h10.99M12.56,324.38h4.71M22.76,324.38h11.78M10.20,330.66h17.27M13.34,333.80h7.85M26.69,333.80h11.78M15.70,338.51h6.28M27.47,338.51h10.99M17.27,340.09h14.13M14.91,341.66h6.28M26.69,341.66h14.92M38.46,346.37h16.48M13.34,347.94h4.71M23.55,347.94h12.56M40.82,349.51h9.42M20.41,351.08h12.56M40.82,352.65h18.05M17.27,355.80h7.07M29.83,355.80h10.99M19.62,357.37h7.85M32.97,357.37h9.42M18.05,366.79h16.48M18.84,380.93h10.99M15.70,385.64h9.42M17.27,387.22h10.21M22.76,390.36h6.28M34.54,390.36h10.21M41.60,391.93h11.78M44.74,395.07h14.13M43.96,398.21h8.63M22.76,401.35h4.71M32.97,401.35h12.56M18.05,404.50h8.63M32.18,404.50h10.99M42.39,409.21h12.56M19.62,410.78h6.28M31.40,410.78h14.92M17.27,417.06h13.35M18.05,418.64h10.21M16.48,428.06h6.28M28.26,428.06h11.78M40.03,429.63h10.99M10.20,434.35h6.28M21.98,434.35h11.78M14.91,446.91h11.78M35.32,450.06h12.56M10.20,453.20h7.85M23.55,453.20h12.56M13.34,454.77h6.28M25.12,454.77h10.99M10.20,456.34h4.71M20.41,456.34h13.35M13.34,457.91h7.85M26.69,457.91h10.21M7.85,461.05h4.71M13.35,461.05h1.57M15.70,461.05h14.13M7.07,468.91h10.21M15.70,476.76h12.56M35.32,479.90h13.35M11.78,484.62h10.99M7.85,487.76h9.42" stroke="#ce9178" stroke-width="1.35" stroke-dasharray="0.68 0.11" fill="none"/></svg>
<div class="abs" style="left:785px;top:62.05px;width:6.6px;height:493.7px;background:linear-gradient(90deg,rgba(0,0,0,0),rgba(0,0,0,0.6))"></div>
<div class="abs" style="left:852.9px;top:62.05px;width:11.1px;height:16.2px;background:rgba(121,121,121,0.4)"></div>
<div class="abs" style="left:330px;top:547.6px;width:429px;height:8.1px;background:rgba(121,121,121,0.5)"></div>
<div class="abs" style="left:863px;top:17.3px;width:1px;height:538.4px;background:#3a3a3a"></div>

<!-- status bar -->
<div class="abs" style="left:37.7px;top:553.7px;width:826.3px;height:2px;background:rgba(30,50,66,0.85)"></div>
<div class="abs" style="left:0;top:555.72px;width:864px;height:17.28px;background:#007acc"></div>
<svg class="abs" style="left:0;top:555.72px" width="864" height="17.3">
<circle cx="17.4" cy="8.4" r="4.6" fill="#fff"/><path d="M15.4,6.4 L19.4,10.4 M19.4,6.4 L15.4,10.4" stroke="#007acc" stroke-width="1.2"/>
<path d="M39.6,3.6 L44.5,12.9 L34.7,12.9 Z" fill="#fff" stroke="#fff" stroke-width="0.6" stroke-linejoin="round"/><path d="M39.6,6.8 L39.6,10 M39.6,11 L39.6,12" stroke="#007acc" stroke-width="1"/>
<circle cx="824.7" cy="8.2" r="4.8" fill="#fff"/><circle cx="823" cy="6.9" r="0.7" fill="#007acc"/><circle cx="826.4" cy="6.9" r="0.7" fill="#007acc"/><path d="M822.3,9 Q824.7,11.6 827.1,9" fill="none" stroke="#007acc" stroke-width="0.9"/>
<path d="M847,3.4 Q850.2,4 850.4,8 L850.8,11 L852,12.6 L842,12.6 L843.2,11 L843.6,8 Q843.8,4 847,3.4 Z" fill="#fff"/><rect x="846" y="12.4" width="2" height="1.4" fill="#fff"/>
</svg>
<div class="st" style="left:25.7px;top:555.3px">0</div>
<div class="st" style="left:48.1px;top:555.3px">0</div>
<div class="st" style="left:627.5px;top:555.2px">行 1, 列 1</div>
<div class="st" style="left:682.6px;top:555.2px">空格: 2</div>
<div class="st" style="left:725.4px;top:555.2px">UTF-8</div>
<div class="st" style="left:766.7px;top:555.2px">LF</div>
<div class="st" style="left:789.6px;top:555.2px">Vue</div>
</div></body></html>
